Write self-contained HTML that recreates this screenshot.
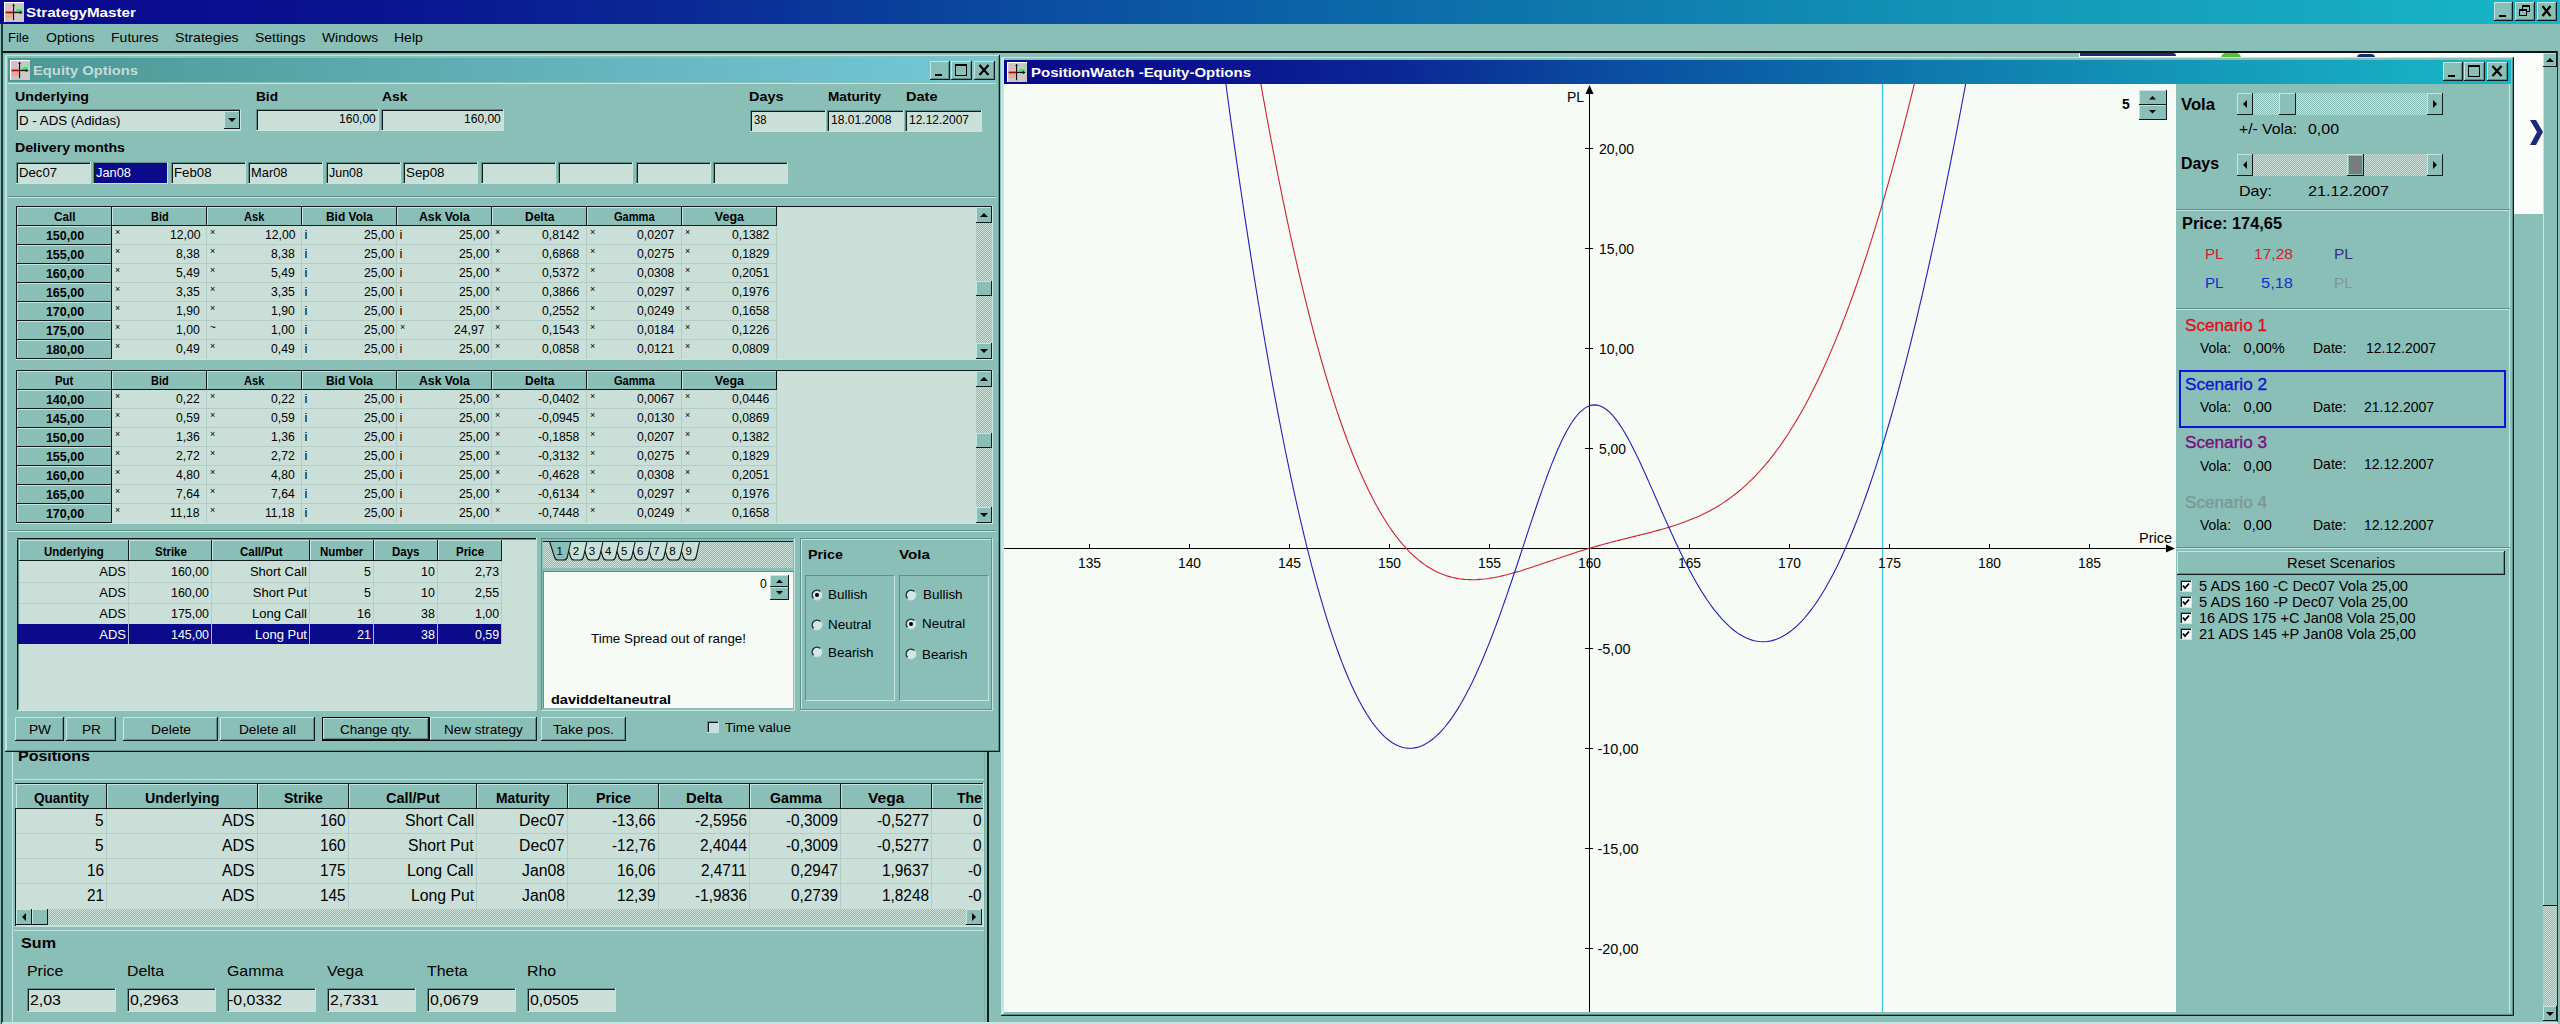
<!DOCTYPE html>
<html lang="en"><head><meta charset="utf-8"><title>StrategyMaster</title>
<style>
html,body{margin:0;padding:0}
body{width:2560px;height:1024px;overflow:hidden;position:relative;background:#8ABFB8;font-family:"Liberation Sans",Arial,sans-serif;color:#000}
div,span,svg{position:absolute;box-sizing:border-box}
span{white-space:pre;line-height:1;transform-origin:0 0}
.hatch{background-color:#8ABFB8;background-image:conic-gradient(#C9DFD8 25%,#8ABFB8 0 50%,#C9DFD8 0 75%,#8ABFB8 0);background-size:2px 2px}

</style></head>
<body>
<div style="left:0px;top:0px;width:2560px;height:24px;background:linear-gradient(90deg,#08088C 0%,#0A1490 15%,#0A2A96 27%,#0A4CA0 40%,#0E76AC 60%,#149ABA 80%,#18B6C6 100%);"></div>
<svg style="left:4px;top:2px" width="20" height="20" viewBox="0 0 20 20"><rect width="20" height="20" fill="#C6C8C4"/><rect x="1" y="1" width="8.5" height="9.5" fill="#D6C0C4"/><rect x="1" y="11" width="8.5" height="5" fill="#E2AE98"/><rect x="1" y="16" width="8.5" height="3" fill="#CFC4C0"/><rect x="10" y="11" width="9" height="8" fill="#D2C8C8"/><path d="M10.5 10 L17.3 3.4 L17.6 10 Z" fill="#48E068"/><path d="M13.5 7 L17.3 3.4 L17.4 7 Z" fill="#90F0A0"/><rect x="1.5" y="9.6" width="8" height="1.7" fill="#A40C10"/><rect x="9.4" y="9.9" width="8.2" height="1.2" fill="#101010"/><path d="M18.6 10.5 L15.8 8.8 L15.8 12.2 Z" fill="#101010"/><rect x="9" y="2.2" width="1.1" height="16" fill="#101010"/><path d="M9.5 1.6 L8.3 4 L10.9 4 Z" fill="#101010"/><rect x="0" y="0" width="20" height="1.1" fill="#fff"/><rect x="0" y="0" width="1.1" height="20" fill="#fff"/></svg>
<span style="left:26.00px;top:6.00px;font-size:13px;font-weight:bold;color:#fff;transform:scaleX(1.1710);">StrategyMaster</span>
<div style="left:2494px;top:2px;width:19px;height:19px;background:#8ABFB8;"></div>
<div style="left:2494px;top:2px;width:19px;height:1px;background:#C4E6E0;"></div>
<div style="left:2494px;top:2px;width:1px;height:19px;background:#C4E6E0;"></div>
<div style="left:2494px;top:20px;width:19px;height:1px;background:#101a1a;"></div>
<div style="left:2512px;top:2px;width:1px;height:19px;background:#101a1a;"></div>
<div style="left:2495px;top:19px;width:17px;height:1px;background:#5E8F8A;"></div>
<div style="left:2511px;top:3px;width:1px;height:17px;background:#5E8F8A;"></div>
<div style="left:2499px;top:15px;width:7px;height:2px;background:#000;"></div>
<div style="left:2515px;top:2px;width:20px;height:19px;background:#8ABFB8;"></div>
<div style="left:2515px;top:2px;width:20px;height:1px;background:#C4E6E0;"></div>
<div style="left:2515px;top:2px;width:1px;height:19px;background:#C4E6E0;"></div>
<div style="left:2515px;top:20px;width:20px;height:1px;background:#101a1a;"></div>
<div style="left:2534px;top:2px;width:1px;height:19px;background:#101a1a;"></div>
<div style="left:2516px;top:19px;width:18px;height:1px;background:#5E8F8A;"></div>
<div style="left:2533px;top:3px;width:1px;height:17px;background:#5E8F8A;"></div>
<div style="left:2522px;top:5px;width:8px;height:7px;border:1px solid #000;border-top:2px solid #000"></div>
<div style="left:2519px;top:9px;width:8px;height:7px;background:#8ABFB8;border:1px solid #000;border-top:2px solid #000"></div>
<div style="left:2537px;top:2px;width:20px;height:19px;background:#8ABFB8;"></div>
<div style="left:2537px;top:2px;width:20px;height:1px;background:#C4E6E0;"></div>
<div style="left:2537px;top:2px;width:1px;height:19px;background:#C4E6E0;"></div>
<div style="left:2537px;top:20px;width:20px;height:1px;background:#101a1a;"></div>
<div style="left:2556px;top:2px;width:1px;height:19px;background:#101a1a;"></div>
<div style="left:2538px;top:19px;width:18px;height:1px;background:#5E8F8A;"></div>
<div style="left:2555px;top:3px;width:1px;height:17px;background:#5E8F8A;"></div>
<svg style="left:2537px;top:2px" width="20" height="19"><path d="M5.5 4 L13.5 14 M13.5 4 L5.5 14" stroke="#000" stroke-width="2.2" fill="none"/></svg>
<span style="left:8.00px;top:30.57px;font-size:13.5px;transform:scaleX(0.9648);">File</span>
<span style="left:46.00px;top:30.57px;font-size:13.5px;transform:scaleX(1.0423);">Options</span>
<span style="left:111.00px;top:30.57px;font-size:13.5px;transform:scaleX(1.0397);">Futures</span>
<span style="left:175.00px;top:30.57px;font-size:13.5px;transform:scaleX(1.0461);">Strategies</span>
<span style="left:255.00px;top:30.57px;font-size:13.5px;transform:scaleX(1.0352);">Settings</span>
<span style="left:321.50px;top:30.57px;font-size:13.5px;transform:scaleX(1.0262);">Windows</span>
<span style="left:393.80px;top:30.57px;font-size:13.5px;transform:scaleX(1.0373);">Help</span>
<div style="left:1px;top:24px;width:2px;height:1000px;background:#1c3a3a;"></div>
<div style="left:2px;top:51px;width:2556px;height:2px;background:#0c1414;"></div>
<div style="left:2557px;top:51px;width:1px;height:973px;background:#1c3030;"></div>
<div style="left:12px;top:752px;width:1px;height:272px;background:#C4E6E0;"></div>
<div style="left:984px;top:752px;width:1px;height:270px;background:#79ADA6;"></div>
<div style="left:987px;top:752px;width:2px;height:270px;background:#0e1c1a;"></div>
<div style="left:2px;top:1022px;width:2556px;height:2px;background:#C4E6E0;"></div>
<span style="left:18.00px;top:748.73px;font-size:14.5px;font-weight:bold;transform:scaleX(1.1032);">Positions</span>
<div style="left:14px;top:779px;width:970px;height:1px;background:#C4E6E0;"></div>
<div style="left:15px;top:783px;width:968px;height:143px;background:#C9DFD8;"></div>
<div style="left:15px;top:783px;width:968px;height:1px;background:#101a1a;"></div>
<div style="left:15px;top:783px;width:1px;height:143px;background:#101a1a;"></div>
<div style="left:15px;top:784px;width:91px;height:24px;background:#8ABFB8;"></div>
<div style="left:16px;top:784px;width:91px;height:1px;background:#C4E6E0;"></div>
<div style="left:16px;top:784px;width:1px;height:24px;background:#C4E6E0;"></div>
<span style="left:34.00px;top:790.65px;font-size:14px;font-weight:bold;transform:scaleX(0.9686);">Quantity</span>
<div style="left:106px;top:784px;width:151px;height:24px;background:#8ABFB8;"></div>
<div style="left:107px;top:784px;width:151px;height:1px;background:#C4E6E0;"></div>
<div style="left:107px;top:784px;width:1px;height:24px;background:#C4E6E0;"></div>
<span style="left:145.25px;top:790.65px;font-size:14px;font-weight:bold;transform:scaleX(1.0188);">Underlying</span>
<div style="left:257px;top:784px;width:91px;height:24px;background:#8ABFB8;"></div>
<div style="left:258px;top:784px;width:91px;height:1px;background:#C4E6E0;"></div>
<div style="left:258px;top:784px;width:1px;height:24px;background:#C4E6E0;"></div>
<span style="left:284.00px;top:790.65px;font-size:14px;font-weight:bold;">Strike</span>
<div style="left:348px;top:784px;width:128px;height:24px;background:#8ABFB8;"></div>
<div style="left:349px;top:784px;width:128px;height:1px;background:#C4E6E0;"></div>
<div style="left:349px;top:784px;width:1px;height:24px;background:#C4E6E0;"></div>
<span style="left:386.10px;top:790.65px;font-size:14px;font-weight:bold;transform:scaleX(1.0321);">Call/Put</span>
<div style="left:476px;top:784px;width:91px;height:24px;background:#8ABFB8;"></div>
<div style="left:477px;top:784px;width:91px;height:1px;background:#C4E6E0;"></div>
<div style="left:477px;top:784px;width:1px;height:24px;background:#C4E6E0;"></div>
<span style="left:495.60px;top:790.65px;font-size:14px;font-weight:bold;transform:scaleX(0.9880);">Maturity</span>
<div style="left:567px;top:784px;width:91px;height:24px;background:#8ABFB8;"></div>
<div style="left:568px;top:784px;width:91px;height:1px;background:#C4E6E0;"></div>
<div style="left:568px;top:784px;width:1px;height:24px;background:#C4E6E0;"></div>
<span style="left:596.00px;top:790.65px;font-size:14px;font-weight:bold;transform:scaleX(1.0219);">Price</span>
<div style="left:658px;top:784px;width:91px;height:24px;background:#8ABFB8;"></div>
<div style="left:659px;top:784px;width:91px;height:1px;background:#C4E6E0;"></div>
<div style="left:659px;top:784px;width:1px;height:24px;background:#C4E6E0;"></div>
<span style="left:686.35px;top:790.65px;font-size:14px;font-weight:bold;transform:scaleX(1.0603);">Delta</span>
<div style="left:749px;top:784px;width:91px;height:24px;background:#8ABFB8;"></div>
<div style="left:750px;top:784px;width:91px;height:1px;background:#C4E6E0;"></div>
<div style="left:750px;top:784px;width:1px;height:24px;background:#C4E6E0;"></div>
<span style="left:769.50px;top:790.65px;font-size:14px;font-weight:bold;transform:scaleX(1.0125);">Gamma</span>
<div style="left:840px;top:784px;width:91px;height:24px;background:#8ABFB8;"></div>
<div style="left:841px;top:784px;width:91px;height:1px;background:#C4E6E0;"></div>
<div style="left:841px;top:784px;width:1px;height:24px;background:#C4E6E0;"></div>
<span style="left:868.35px;top:790.65px;font-size:14px;font-weight:bold;transform:scaleX(1.1100);">Vega</span>
<div style="left:931px;top:784px;width:52px;height:24px;background:#8ABFB8;"></div>
<div style="left:932px;top:784px;width:52px;height:1px;background:#C4E6E0;"></div>
<div style="left:932px;top:784px;width:1px;height:24px;background:#C4E6E0;"></div>
<span style="left:957.00px;top:790.65px;font-size:14px;font-weight:bold;">The</span>
<div style="left:106px;top:784px;width:1px;height:25px;background:#101a1a;"></div>
<div style="left:257px;top:784px;width:1px;height:25px;background:#101a1a;"></div>
<div style="left:348px;top:784px;width:1px;height:25px;background:#101a1a;"></div>
<div style="left:476px;top:784px;width:1px;height:25px;background:#101a1a;"></div>
<div style="left:567px;top:784px;width:1px;height:25px;background:#101a1a;"></div>
<div style="left:658px;top:784px;width:1px;height:25px;background:#101a1a;"></div>
<div style="left:749px;top:784px;width:1px;height:25px;background:#101a1a;"></div>
<div style="left:840px;top:784px;width:1px;height:25px;background:#101a1a;"></div>
<div style="left:931px;top:784px;width:1px;height:25px;background:#101a1a;"></div>
<div style="left:15px;top:808px;width:968px;height:1px;background:#101a1a;"></div>
<span style="left:95.15px;top:813.26px;font-size:16px;transform:scaleX(0.9600);">5</span>
<span style="left:222.29px;top:813.26px;font-size:16px;transform:scaleX(0.9850);">ADS</span>
<span style="left:320.06px;top:813.26px;font-size:16px;transform:scaleX(0.9600);">160</span>
<span style="left:404.50px;top:813.26px;font-size:16px;transform:scaleX(0.9850);">Short Call</span>
<span style="left:519.14px;top:813.26px;font-size:16px;transform:scaleX(0.9850);">Dec07</span>
<span style="left:612.14px;top:813.26px;font-size:16px;transform:scaleX(0.9600);">-13,66</span>
<span style="left:694.61px;top:813.26px;font-size:16px;transform:scaleX(0.9600);">-2,5956</span>
<span style="left:785.61px;top:813.26px;font-size:16px;transform:scaleX(0.9600);">-0,3009</span>
<span style="left:876.61px;top:813.26px;font-size:16px;transform:scaleX(0.9600);">-0,5277</span>
<span style="left:972.69px;top:813.26px;font-size:16px;transform:scaleX(0.9600);">0,</span>
<div style="left:16px;top:833px;width:966px;height:1px;background:#B3CCC5;"></div>
<span style="left:95.15px;top:838.26px;font-size:16px;transform:scaleX(0.9600);">5</span>
<span style="left:222.29px;top:838.26px;font-size:16px;transform:scaleX(0.9850);">ADS</span>
<span style="left:320.06px;top:838.26px;font-size:16px;transform:scaleX(0.9600);">160</span>
<span style="left:408.00px;top:838.26px;font-size:16px;transform:scaleX(0.9850);">Short Put</span>
<span style="left:519.14px;top:838.26px;font-size:16px;transform:scaleX(0.9850);">Dec07</span>
<span style="left:612.14px;top:838.26px;font-size:16px;transform:scaleX(0.9600);">-12,76</span>
<span style="left:699.72px;top:838.26px;font-size:16px;transform:scaleX(0.9600);">2,4044</span>
<span style="left:785.61px;top:838.26px;font-size:16px;transform:scaleX(0.9600);">-0,3009</span>
<span style="left:876.61px;top:838.26px;font-size:16px;transform:scaleX(0.9600);">-0,5277</span>
<span style="left:972.69px;top:838.26px;font-size:16px;transform:scaleX(0.9600);">0,</span>
<div style="left:16px;top:858px;width:966px;height:1px;background:#B3CCC5;"></div>
<span style="left:86.62px;top:863.26px;font-size:16px;transform:scaleX(0.9600);">16</span>
<span style="left:222.29px;top:863.26px;font-size:16px;transform:scaleX(0.9850);">ADS</span>
<span style="left:320.06px;top:863.26px;font-size:16px;transform:scaleX(0.9600);">175</span>
<span style="left:407.10px;top:863.26px;font-size:16px;transform:scaleX(0.9850);">Long Call</span>
<span style="left:521.76px;top:863.26px;font-size:16px;transform:scaleX(0.9850);">Jan08</span>
<span style="left:617.25px;top:863.26px;font-size:16px;transform:scaleX(0.9600);">16,06</span>
<span style="left:700.86px;top:863.26px;font-size:16px;transform:scaleX(0.9600);">2,4711</span>
<span style="left:790.72px;top:863.26px;font-size:16px;transform:scaleX(0.9600);">0,2947</span>
<span style="left:881.72px;top:863.26px;font-size:16px;transform:scaleX(0.9600);">1,9637</span>
<span style="left:967.58px;top:863.26px;font-size:16px;transform:scaleX(0.9600);">-0,</span>
<div style="left:16px;top:883px;width:966px;height:1px;background:#B3CCC5;"></div>
<span style="left:86.62px;top:888.26px;font-size:16px;transform:scaleX(0.9600);">21</span>
<span style="left:222.29px;top:888.26px;font-size:16px;transform:scaleX(0.9850);">ADS</span>
<span style="left:320.06px;top:888.26px;font-size:16px;transform:scaleX(0.9600);">145</span>
<span style="left:410.60px;top:888.26px;font-size:16px;transform:scaleX(0.9850);">Long Put</span>
<span style="left:521.76px;top:888.26px;font-size:16px;transform:scaleX(0.9850);">Jan08</span>
<span style="left:617.25px;top:888.26px;font-size:16px;transform:scaleX(0.9600);">12,39</span>
<span style="left:694.61px;top:888.26px;font-size:16px;transform:scaleX(0.9600);">-1,9836</span>
<span style="left:790.72px;top:888.26px;font-size:16px;transform:scaleX(0.9600);">0,2739</span>
<span style="left:881.72px;top:888.26px;font-size:16px;transform:scaleX(0.9600);">1,8248</span>
<span style="left:967.58px;top:888.26px;font-size:16px;transform:scaleX(0.9600);">-0,</span>
<div style="left:106px;top:809px;width:1px;height:100px;background:#B3CCC5;"></div>
<div style="left:257px;top:809px;width:1px;height:100px;background:#B3CCC5;"></div>
<div style="left:348px;top:809px;width:1px;height:100px;background:#B3CCC5;"></div>
<div style="left:476px;top:809px;width:1px;height:100px;background:#B3CCC5;"></div>
<div style="left:567px;top:809px;width:1px;height:100px;background:#B3CCC5;"></div>
<div style="left:658px;top:809px;width:1px;height:100px;background:#B3CCC5;"></div>
<div style="left:749px;top:809px;width:1px;height:100px;background:#B3CCC5;"></div>
<div style="left:840px;top:809px;width:1px;height:100px;background:#B3CCC5;"></div>
<div style="left:931px;top:809px;width:1px;height:100px;background:#B3CCC5;"></div>
<div class="hatch" style="left:16px;top:909px;width:966px;height:16px;"></div>
<div style="left:16px;top:909px;width:16px;height:16px;background:#8ABFB8;"></div>
<div style="left:16px;top:909px;width:16px;height:1px;background:#C4E6E0;"></div>
<div style="left:16px;top:909px;width:1px;height:16px;background:#C4E6E0;"></div>
<div style="left:16px;top:924px;width:16px;height:1px;background:#101a1a;"></div>
<div style="left:31px;top:909px;width:1px;height:16px;background:#101a1a;"></div>
<div style="left:32px;top:909px;width:16px;height:16px;background:#8ABFB8;"></div>
<div style="left:32px;top:909px;width:16px;height:1px;background:#C4E6E0;"></div>
<div style="left:32px;top:909px;width:1px;height:16px;background:#C4E6E0;"></div>
<div style="left:32px;top:924px;width:16px;height:1px;background:#101a1a;"></div>
<div style="left:47px;top:909px;width:1px;height:16px;background:#101a1a;"></div>
<div style="left:966px;top:909px;width:16px;height:16px;background:#8ABFB8;"></div>
<div style="left:966px;top:909px;width:16px;height:1px;background:#C4E6E0;"></div>
<div style="left:966px;top:909px;width:1px;height:16px;background:#C4E6E0;"></div>
<div style="left:966px;top:924px;width:16px;height:1px;background:#101a1a;"></div>
<div style="left:981px;top:909px;width:1px;height:16px;background:#101a1a;"></div>
<svg style="left:16px;top:909px" width="16" height="16"><path d="M10 4 L6 8 L10 12Z" fill="#000"/></svg>
<svg style="left:966px;top:909px" width="16" height="16"><path d="M6 4 L10 8 L6 12Z" fill="#000"/></svg>
<div style="left:15px;top:926px;width:968px;height:1px;background:#C4E6E0;"></div>
<div style="left:983px;top:783px;width:1px;height:144px;background:#C4E6E0;"></div>
<div style="left:984px;top:783px;width:3px;height:144px;background:#8ABFB8;"></div>
<div style="left:984px;top:752px;width:1px;height:270px;background:#79ADA6;"></div>
<div style="left:14px;top:930px;width:970px;height:1px;background:#C4E6E0;"></div>
<span style="left:21.00px;top:935.30px;font-size:15px;font-weight:bold;transform:scaleX(1.0764);">Sum</span>
<span style="left:27.00px;top:962.80px;font-size:15px;transform:scaleX(1.0600);">Price</span>
<div style="left:27px;top:988px;width:89px;height:24px;background:#C9DFD8;"></div>
<div style="left:27px;top:988px;width:89px;height:1px;background:#5E8F8A;"></div>
<div style="left:27px;top:988px;width:1px;height:24px;background:#5E8F8A;"></div>
<div style="left:28px;top:989px;width:87px;height:1px;background:#101a1a;"></div>
<div style="left:28px;top:989px;width:1px;height:22px;background:#101a1a;"></div>
<div style="left:27px;top:1011px;width:89px;height:1px;background:#C4E6E0;"></div>
<div style="left:115px;top:988px;width:1px;height:24px;background:#C4E6E0;"></div>
<span style="left:30.00px;top:991.80px;font-size:15px;transform:scaleX(1.0600);">2,03</span>
<span style="left:127.00px;top:962.80px;font-size:15px;transform:scaleX(1.0600);">Delta</span>
<div style="left:127px;top:988px;width:89px;height:24px;background:#C9DFD8;"></div>
<div style="left:127px;top:988px;width:89px;height:1px;background:#5E8F8A;"></div>
<div style="left:127px;top:988px;width:1px;height:24px;background:#5E8F8A;"></div>
<div style="left:128px;top:989px;width:87px;height:1px;background:#101a1a;"></div>
<div style="left:128px;top:989px;width:1px;height:22px;background:#101a1a;"></div>
<div style="left:127px;top:1011px;width:89px;height:1px;background:#C4E6E0;"></div>
<div style="left:215px;top:988px;width:1px;height:24px;background:#C4E6E0;"></div>
<span style="left:130.00px;top:991.80px;font-size:15px;transform:scaleX(1.0600);">0,2963</span>
<span style="left:227.00px;top:962.80px;font-size:15px;transform:scaleX(1.0600);">Gamma</span>
<div style="left:227px;top:988px;width:89px;height:24px;background:#C9DFD8;"></div>
<div style="left:227px;top:988px;width:89px;height:1px;background:#5E8F8A;"></div>
<div style="left:227px;top:988px;width:1px;height:24px;background:#5E8F8A;"></div>
<div style="left:228px;top:989px;width:87px;height:1px;background:#101a1a;"></div>
<div style="left:228px;top:989px;width:1px;height:22px;background:#101a1a;"></div>
<div style="left:227px;top:1011px;width:89px;height:1px;background:#C4E6E0;"></div>
<div style="left:315px;top:988px;width:1px;height:24px;background:#C4E6E0;"></div>
<span style="left:228.00px;top:991.80px;font-size:15px;transform:scaleX(1.0600);">-0,0332</span>
<span style="left:327.00px;top:962.80px;font-size:15px;transform:scaleX(1.0600);">Vega</span>
<div style="left:327px;top:988px;width:89px;height:24px;background:#C9DFD8;"></div>
<div style="left:327px;top:988px;width:89px;height:1px;background:#5E8F8A;"></div>
<div style="left:327px;top:988px;width:1px;height:24px;background:#5E8F8A;"></div>
<div style="left:328px;top:989px;width:87px;height:1px;background:#101a1a;"></div>
<div style="left:328px;top:989px;width:1px;height:22px;background:#101a1a;"></div>
<div style="left:327px;top:1011px;width:89px;height:1px;background:#C4E6E0;"></div>
<div style="left:415px;top:988px;width:1px;height:24px;background:#C4E6E0;"></div>
<span style="left:330.00px;top:991.80px;font-size:15px;transform:scaleX(1.0600);">2,7331</span>
<span style="left:427.00px;top:962.80px;font-size:15px;transform:scaleX(1.0600);">Theta</span>
<div style="left:427px;top:988px;width:89px;height:24px;background:#C9DFD8;"></div>
<div style="left:427px;top:988px;width:89px;height:1px;background:#5E8F8A;"></div>
<div style="left:427px;top:988px;width:1px;height:24px;background:#5E8F8A;"></div>
<div style="left:428px;top:989px;width:87px;height:1px;background:#101a1a;"></div>
<div style="left:428px;top:989px;width:1px;height:22px;background:#101a1a;"></div>
<div style="left:427px;top:1011px;width:89px;height:1px;background:#C4E6E0;"></div>
<div style="left:515px;top:988px;width:1px;height:24px;background:#C4E6E0;"></div>
<span style="left:430.00px;top:991.80px;font-size:15px;transform:scaleX(1.0600);">0,0679</span>
<span style="left:527.00px;top:962.80px;font-size:15px;transform:scaleX(1.0600);">Rho</span>
<div style="left:527px;top:988px;width:89px;height:24px;background:#C9DFD8;"></div>
<div style="left:527px;top:988px;width:89px;height:1px;background:#5E8F8A;"></div>
<div style="left:527px;top:988px;width:1px;height:24px;background:#5E8F8A;"></div>
<div style="left:528px;top:989px;width:87px;height:1px;background:#101a1a;"></div>
<div style="left:528px;top:989px;width:1px;height:22px;background:#101a1a;"></div>
<div style="left:527px;top:1011px;width:89px;height:1px;background:#C4E6E0;"></div>
<div style="left:615px;top:988px;width:1px;height:24px;background:#C4E6E0;"></div>
<span style="left:530.00px;top:991.80px;font-size:15px;transform:scaleX(1.0600);">0,0505</span>
<div style="left:5px;top:55px;width:995px;height:697px;background:#8ABFB8;"></div>
<div style="left:5px;top:55px;width:995px;height:1px;background:#C4E6E0;"></div>
<div style="left:5px;top:55px;width:2px;height:697px;background:#C4E6E0;"></div>
<div style="left:5px;top:751px;width:995px;height:1px;background:#101a1a;"></div>
<div style="left:999px;top:55px;width:1px;height:697px;background:#101a1a;"></div>
<div style="left:6px;top:750px;width:993px;height:1px;background:#5E8F8A;"></div>
<div style="left:998px;top:56px;width:1px;height:695px;background:#5E8F8A;"></div>
<div style="left:8px;top:58px;width:988px;height:24px;background:linear-gradient(90deg,#4C9894 0%,#74C8D8 100%);"></div>
<div style="left:8px;top:83px;width:988px;height:1px;background:#C4E6E0;"></div>
<svg style="left:10px;top:60px" width="20" height="20" viewBox="0 0 20 20"><rect width="20" height="20" fill="#C6C8C4"/><rect x="1" y="1" width="8.5" height="9.5" fill="#D6C0C4"/><rect x="1" y="11" width="8.5" height="5" fill="#E2AE98"/><rect x="1" y="16" width="8.5" height="3" fill="#CFC4C0"/><rect x="10" y="11" width="9" height="8" fill="#D2C8C8"/><path d="M10.5 10 L17.3 3.4 L17.6 10 Z" fill="#48E068"/><path d="M13.5 7 L17.3 3.4 L17.4 7 Z" fill="#90F0A0"/><rect x="1.5" y="9.6" width="8" height="1.7" fill="#A40C10"/><rect x="9.4" y="9.9" width="8.2" height="1.2" fill="#101010"/><path d="M18.6 10.5 L15.8 8.8 L15.8 12.2 Z" fill="#101010"/><rect x="9" y="2.2" width="1.1" height="16" fill="#101010"/><path d="M9.5 1.6 L8.3 4 L10.9 4 Z" fill="#101010"/><rect x="0" y="0" width="20" height="1.1" fill="#fff"/><rect x="0" y="0" width="1.1" height="20" fill="#fff"/></svg>
<span style="left:33.00px;top:64.00px;font-size:13px;font-weight:bold;color:#C4DCD8;transform:scaleX(1.1357);">Equity Options</span>
<div style="left:930px;top:61px;width:20px;height:19px;background:#8ABFB8;"></div>
<div style="left:930px;top:61px;width:20px;height:1px;background:#C4E6E0;"></div>
<div style="left:930px;top:61px;width:1px;height:19px;background:#C4E6E0;"></div>
<div style="left:930px;top:79px;width:20px;height:1px;background:#101a1a;"></div>
<div style="left:949px;top:61px;width:1px;height:19px;background:#101a1a;"></div>
<div style="left:931px;top:78px;width:18px;height:1px;background:#5E8F8A;"></div>
<div style="left:948px;top:62px;width:1px;height:17px;background:#5E8F8A;"></div>
<div style="left:935px;top:74px;width:7px;height:2px;background:#000;"></div>
<div style="left:951px;top:61px;width:21px;height:19px;background:#8ABFB8;"></div>
<div style="left:951px;top:61px;width:21px;height:1px;background:#C4E6E0;"></div>
<div style="left:951px;top:61px;width:1px;height:19px;background:#C4E6E0;"></div>
<div style="left:951px;top:79px;width:21px;height:1px;background:#101a1a;"></div>
<div style="left:971px;top:61px;width:1px;height:19px;background:#101a1a;"></div>
<div style="left:952px;top:78px;width:19px;height:1px;background:#5E8F8A;"></div>
<div style="left:970px;top:62px;width:1px;height:17px;background:#5E8F8A;"></div>
<div style="left:955px;top:64px;width:12px;height:12px;border:1px solid #000;border-top:2px solid #000"></div>
<div style="left:974px;top:61px;width:21px;height:19px;background:#8ABFB8;"></div>
<div style="left:974px;top:61px;width:21px;height:1px;background:#C4E6E0;"></div>
<div style="left:974px;top:61px;width:1px;height:19px;background:#C4E6E0;"></div>
<div style="left:974px;top:79px;width:21px;height:1px;background:#101a1a;"></div>
<div style="left:994px;top:61px;width:1px;height:19px;background:#101a1a;"></div>
<div style="left:975px;top:78px;width:19px;height:1px;background:#5E8F8A;"></div>
<div style="left:993px;top:62px;width:1px;height:17px;background:#5E8F8A;"></div>
<svg style="left:974px;top:61px" width="21" height="19"><path d="M5.5 4 L14.5 14 M14.5 4 L5.5 14" stroke="#000" stroke-width="2.2" fill="none"/></svg>
<span style="left:15.00px;top:90.00px;font-size:13px;font-weight:bold;transform:scaleX(1.0897);">Underlying</span>
<span style="left:255.50px;top:90.00px;font-size:13px;font-weight:bold;transform:scaleX(1.0500);">Bid</span>
<span style="left:382.00px;top:90.00px;font-size:13px;font-weight:bold;transform:scaleX(1.0688);">Ask</span>
<span style="left:748.50px;top:89.60px;font-size:13px;font-weight:bold;transform:scaleX(1.1101);">Days</span>
<span style="left:827.50px;top:89.60px;font-size:13px;font-weight:bold;transform:scaleX(1.0482);">Maturity</span>
<span style="left:905.60px;top:89.60px;font-size:13px;font-weight:bold;transform:scaleX(1.1175);">Date</span>
<div style="left:16px;top:109px;width:225px;height:22px;background:#C9DFD8;"></div>
<div style="left:16px;top:109px;width:225px;height:1px;background:#5E8F8A;"></div>
<div style="left:16px;top:109px;width:1px;height:22px;background:#5E8F8A;"></div>
<div style="left:17px;top:110px;width:223px;height:1px;background:#101a1a;"></div>
<div style="left:17px;top:110px;width:1px;height:20px;background:#101a1a;"></div>
<div style="left:16px;top:130px;width:225px;height:1px;background:#C4E6E0;"></div>
<div style="left:240px;top:109px;width:1px;height:22px;background:#C4E6E0;"></div>
<span style="left:19.00px;top:114.00px;font-size:13px;transform:scaleX(1.0254);">D - ADS (Adidas)</span>
<div style="left:224px;top:111px;width:16px;height:18px;background:#8ABFB8;"></div>
<div style="left:224px;top:111px;width:16px;height:1px;background:#C4E6E0;"></div>
<div style="left:224px;top:111px;width:1px;height:18px;background:#C4E6E0;"></div>
<div style="left:224px;top:128px;width:16px;height:1px;background:#101a1a;"></div>
<div style="left:239px;top:111px;width:1px;height:18px;background:#101a1a;"></div>
<svg style="left:224px;top:111px" width="16" height="18"><path d="M4 7 L12 7 L8 11Z" fill="#000"/></svg>
<div style="left:256px;top:109px;width:123px;height:22px;background:#C9DFD8;"></div>
<div style="left:256px;top:109px;width:123px;height:1px;background:#5E8F8A;"></div>
<div style="left:256px;top:109px;width:1px;height:22px;background:#5E8F8A;"></div>
<div style="left:257px;top:110px;width:121px;height:1px;background:#101a1a;"></div>
<div style="left:257px;top:110px;width:1px;height:20px;background:#101a1a;"></div>
<div style="left:256px;top:130px;width:123px;height:1px;background:#C4E6E0;"></div>
<div style="left:378px;top:109px;width:1px;height:22px;background:#C4E6E0;"></div>
<span style="left:338.70px;top:113.42px;font-size:12.5px;transform:scaleX(0.9625);">160,00</span>
<div style="left:381px;top:109px;width:123px;height:22px;background:#C9DFD8;"></div>
<div style="left:381px;top:109px;width:123px;height:1px;background:#5E8F8A;"></div>
<div style="left:381px;top:109px;width:1px;height:22px;background:#5E8F8A;"></div>
<div style="left:382px;top:110px;width:121px;height:1px;background:#101a1a;"></div>
<div style="left:382px;top:110px;width:1px;height:20px;background:#101a1a;"></div>
<div style="left:381px;top:130px;width:123px;height:1px;background:#C4E6E0;"></div>
<div style="left:503px;top:109px;width:1px;height:22px;background:#C4E6E0;"></div>
<span style="left:463.70px;top:113.42px;font-size:12.5px;transform:scaleX(0.9625);">160,00</span>
<div style="left:750px;top:110px;width:76px;height:22px;background:#C9DFD8;"></div>
<div style="left:750px;top:110px;width:76px;height:1px;background:#5E8F8A;"></div>
<div style="left:750px;top:110px;width:1px;height:22px;background:#5E8F8A;"></div>
<div style="left:751px;top:111px;width:74px;height:1px;background:#101a1a;"></div>
<div style="left:751px;top:111px;width:1px;height:20px;background:#101a1a;"></div>
<div style="left:750px;top:131px;width:76px;height:1px;background:#C4E6E0;"></div>
<div style="left:825px;top:110px;width:1px;height:22px;background:#C4E6E0;"></div>
<span style="left:753.80px;top:113.40px;font-size:13px;transform:scaleX(0.8639);">38</span>
<div style="left:827px;top:110px;width:77px;height:22px;background:#C9DFD8;"></div>
<div style="left:827px;top:110px;width:77px;height:1px;background:#5E8F8A;"></div>
<div style="left:827px;top:110px;width:1px;height:22px;background:#5E8F8A;"></div>
<div style="left:828px;top:111px;width:75px;height:1px;background:#101a1a;"></div>
<div style="left:828px;top:111px;width:1px;height:20px;background:#101a1a;"></div>
<div style="left:827px;top:131px;width:77px;height:1px;background:#C4E6E0;"></div>
<div style="left:903px;top:110px;width:1px;height:22px;background:#C4E6E0;"></div>
<span style="left:830.60px;top:113.40px;font-size:13px;transform:scaleX(0.9297);">18.01.2008</span>
<div style="left:905px;top:110px;width:77px;height:22px;background:#C9DFD8;"></div>
<div style="left:905px;top:110px;width:77px;height:1px;background:#5E8F8A;"></div>
<div style="left:905px;top:110px;width:1px;height:22px;background:#5E8F8A;"></div>
<div style="left:906px;top:111px;width:75px;height:1px;background:#101a1a;"></div>
<div style="left:906px;top:111px;width:1px;height:20px;background:#101a1a;"></div>
<div style="left:905px;top:131px;width:77px;height:1px;background:#C4E6E0;"></div>
<div style="left:981px;top:110px;width:1px;height:22px;background:#C4E6E0;"></div>
<span style="left:908.80px;top:113.40px;font-size:13px;transform:scaleX(0.9220);">12.12.2007</span>
<span style="left:15.00px;top:141.00px;font-size:13px;font-weight:bold;transform:scaleX(1.0874);">Delivery months</span>
<div style="left:16px;top:162px;width:75px;height:22px;background:#C9DFD8;"></div>
<div style="left:16px;top:162px;width:75px;height:1px;background:#5E8F8A;"></div>
<div style="left:16px;top:162px;width:1px;height:22px;background:#5E8F8A;"></div>
<div style="left:17px;top:163px;width:73px;height:1px;background:#101a1a;"></div>
<div style="left:17px;top:163px;width:1px;height:20px;background:#101a1a;"></div>
<div style="left:16px;top:183px;width:75px;height:1px;background:#C4E6E0;"></div>
<div style="left:90px;top:162px;width:1px;height:22px;background:#C4E6E0;"></div>
<span style="left:19.00px;top:166.00px;font-size:13px;transform:scaleX(1.0112);">Dec07</span>
<div style="left:93px;top:162px;width:75px;height:22px;background:#C9DFD8;"></div>
<div style="left:93px;top:162px;width:75px;height:1px;background:#5E8F8A;"></div>
<div style="left:93px;top:162px;width:1px;height:22px;background:#5E8F8A;"></div>
<div style="left:94px;top:163px;width:73px;height:1px;background:#101a1a;"></div>
<div style="left:94px;top:163px;width:1px;height:20px;background:#101a1a;"></div>
<div style="left:93px;top:183px;width:75px;height:1px;background:#C4E6E0;"></div>
<div style="left:167px;top:162px;width:1px;height:22px;background:#C4E6E0;"></div>
<div style="left:95px;top:164px;width:72px;height:19px;background:#0A0A8A;"></div>
<span style="left:96.00px;top:166.00px;font-size:13px;color:#fff;transform:scaleX(0.9881);">Jan08</span>
<div style="left:171px;top:162px;width:75px;height:22px;background:#C9DFD8;"></div>
<div style="left:171px;top:162px;width:75px;height:1px;background:#5E8F8A;"></div>
<div style="left:171px;top:162px;width:1px;height:22px;background:#5E8F8A;"></div>
<div style="left:172px;top:163px;width:73px;height:1px;background:#101a1a;"></div>
<div style="left:172px;top:163px;width:1px;height:20px;background:#101a1a;"></div>
<div style="left:171px;top:183px;width:75px;height:1px;background:#C4E6E0;"></div>
<div style="left:245px;top:162px;width:1px;height:22px;background:#C4E6E0;"></div>
<span style="left:174.00px;top:166.00px;font-size:13px;transform:scaleX(1.0169);">Feb08</span>
<div style="left:248px;top:162px;width:75px;height:22px;background:#C9DFD8;"></div>
<div style="left:248px;top:162px;width:75px;height:1px;background:#5E8F8A;"></div>
<div style="left:248px;top:162px;width:1px;height:22px;background:#5E8F8A;"></div>
<div style="left:249px;top:163px;width:73px;height:1px;background:#101a1a;"></div>
<div style="left:249px;top:163px;width:1px;height:20px;background:#101a1a;"></div>
<div style="left:248px;top:183px;width:75px;height:1px;background:#C4E6E0;"></div>
<div style="left:322px;top:162px;width:1px;height:22px;background:#C4E6E0;"></div>
<span style="left:251.00px;top:166.00px;font-size:13px;transform:scaleX(0.9903);">Mar08</span>
<div style="left:326px;top:162px;width:75px;height:22px;background:#C9DFD8;"></div>
<div style="left:326px;top:162px;width:75px;height:1px;background:#5E8F8A;"></div>
<div style="left:326px;top:162px;width:1px;height:22px;background:#5E8F8A;"></div>
<div style="left:327px;top:163px;width:73px;height:1px;background:#101a1a;"></div>
<div style="left:327px;top:163px;width:1px;height:20px;background:#101a1a;"></div>
<div style="left:326px;top:183px;width:75px;height:1px;background:#C4E6E0;"></div>
<div style="left:400px;top:162px;width:1px;height:22px;background:#C4E6E0;"></div>
<span style="left:329.00px;top:166.00px;font-size:13px;transform:scaleX(0.9599);">Jun08</span>
<div style="left:403px;top:162px;width:75px;height:22px;background:#C9DFD8;"></div>
<div style="left:403px;top:162px;width:75px;height:1px;background:#5E8F8A;"></div>
<div style="left:403px;top:162px;width:1px;height:22px;background:#5E8F8A;"></div>
<div style="left:404px;top:163px;width:73px;height:1px;background:#101a1a;"></div>
<div style="left:404px;top:163px;width:1px;height:20px;background:#101a1a;"></div>
<div style="left:403px;top:183px;width:75px;height:1px;background:#C4E6E0;"></div>
<div style="left:477px;top:162px;width:1px;height:22px;background:#C4E6E0;"></div>
<span style="left:406.00px;top:166.00px;font-size:13px;transform:scaleX(1.0241);">Sep08</span>
<div style="left:481px;top:162px;width:75px;height:22px;background:#C9DFD8;"></div>
<div style="left:481px;top:162px;width:75px;height:1px;background:#5E8F8A;"></div>
<div style="left:481px;top:162px;width:1px;height:22px;background:#5E8F8A;"></div>
<div style="left:482px;top:163px;width:73px;height:1px;background:#101a1a;"></div>
<div style="left:482px;top:163px;width:1px;height:20px;background:#101a1a;"></div>
<div style="left:481px;top:183px;width:75px;height:1px;background:#C4E6E0;"></div>
<div style="left:555px;top:162px;width:1px;height:22px;background:#C4E6E0;"></div>
<div style="left:558px;top:162px;width:75px;height:22px;background:#C9DFD8;"></div>
<div style="left:558px;top:162px;width:75px;height:1px;background:#5E8F8A;"></div>
<div style="left:558px;top:162px;width:1px;height:22px;background:#5E8F8A;"></div>
<div style="left:559px;top:163px;width:73px;height:1px;background:#101a1a;"></div>
<div style="left:559px;top:163px;width:1px;height:20px;background:#101a1a;"></div>
<div style="left:558px;top:183px;width:75px;height:1px;background:#C4E6E0;"></div>
<div style="left:632px;top:162px;width:1px;height:22px;background:#C4E6E0;"></div>
<div style="left:636px;top:162px;width:75px;height:22px;background:#C9DFD8;"></div>
<div style="left:636px;top:162px;width:75px;height:1px;background:#5E8F8A;"></div>
<div style="left:636px;top:162px;width:1px;height:22px;background:#5E8F8A;"></div>
<div style="left:637px;top:163px;width:73px;height:1px;background:#101a1a;"></div>
<div style="left:637px;top:163px;width:1px;height:20px;background:#101a1a;"></div>
<div style="left:636px;top:183px;width:75px;height:1px;background:#C4E6E0;"></div>
<div style="left:710px;top:162px;width:1px;height:22px;background:#C4E6E0;"></div>
<div style="left:713px;top:162px;width:75px;height:22px;background:#C9DFD8;"></div>
<div style="left:713px;top:162px;width:75px;height:1px;background:#5E8F8A;"></div>
<div style="left:713px;top:162px;width:1px;height:22px;background:#5E8F8A;"></div>
<div style="left:714px;top:163px;width:73px;height:1px;background:#101a1a;"></div>
<div style="left:714px;top:163px;width:1px;height:20px;background:#101a1a;"></div>
<div style="left:713px;top:183px;width:75px;height:1px;background:#C4E6E0;"></div>
<div style="left:787px;top:162px;width:1px;height:22px;background:#C4E6E0;"></div>
<div style="left:8px;top:196px;width:988px;height:1px;background:#5E8F8A;"></div>
<div style="left:8px;top:197px;width:988px;height:1px;background:#C4E6E0;"></div>
<div style="left:16px;top:206px;width:976px;height:153px;background:#C9DFD8;"></div>
<div style="left:16px;top:206px;width:976px;height:1px;background:#101a1a;"></div>
<div style="left:16px;top:206px;width:1px;height:153px;background:#101a1a;"></div>
<div style="left:16px;top:359px;width:977px;height:1px;background:#C4E6E0;"></div>
<div style="left:992px;top:206px;width:1px;height:154px;background:#C4E6E0;"></div>
<div style="left:17px;top:207px;width:95px;height:18px;background:#8ABFB8;"></div>
<div style="left:17px;top:207px;width:95px;height:1px;background:#C4E6E0;"></div>
<div style="left:17px;top:207px;width:1px;height:18px;background:#C4E6E0;"></div>
<div style="left:111px;top:207px;width:1px;height:19px;background:#101a1a;"></div>
<span style="left:53.75px;top:211.42px;font-size:12.5px;font-weight:bold;transform:scaleX(0.9373);">Call</span>
<div style="left:112px;top:207px;width:95px;height:18px;background:#8ABFB8;"></div>
<div style="left:112px;top:207px;width:95px;height:1px;background:#C4E6E0;"></div>
<div style="left:112px;top:207px;width:1px;height:18px;background:#C4E6E0;"></div>
<div style="left:206px;top:207px;width:1px;height:19px;background:#101a1a;"></div>
<span style="left:150.70px;top:211.42px;font-size:12.5px;font-weight:bold;transform:scaleX(0.8739);">Bid</span>
<div style="left:207px;top:207px;width:95px;height:18px;background:#8ABFB8;"></div>
<div style="left:207px;top:207px;width:95px;height:1px;background:#C4E6E0;"></div>
<div style="left:207px;top:207px;width:1px;height:18px;background:#C4E6E0;"></div>
<div style="left:301px;top:207px;width:1px;height:19px;background:#101a1a;"></div>
<span style="left:244.35px;top:211.42px;font-size:12.5px;font-weight:bold;transform:scaleX(0.8850);">Ask</span>
<div style="left:302px;top:207px;width:95px;height:18px;background:#8ABFB8;"></div>
<div style="left:302px;top:207px;width:95px;height:1px;background:#C4E6E0;"></div>
<div style="left:302px;top:207px;width:1px;height:18px;background:#C4E6E0;"></div>
<div style="left:396px;top:207px;width:1px;height:19px;background:#101a1a;"></div>
<span style="left:326.05px;top:211.42px;font-size:12.5px;font-weight:bold;transform:scaleX(0.9553);">Bid Vola</span>
<div style="left:397px;top:207px;width:95px;height:18px;background:#8ABFB8;"></div>
<div style="left:397px;top:207px;width:95px;height:1px;background:#C4E6E0;"></div>
<div style="left:397px;top:207px;width:1px;height:18px;background:#C4E6E0;"></div>
<div style="left:491px;top:207px;width:1px;height:19px;background:#101a1a;"></div>
<span style="left:419.10px;top:211.42px;font-size:12.5px;font-weight:bold;transform:scaleX(0.9793);">Ask Vola</span>
<div style="left:492px;top:207px;width:95px;height:18px;background:#8ABFB8;"></div>
<div style="left:492px;top:207px;width:95px;height:1px;background:#C4E6E0;"></div>
<div style="left:492px;top:207px;width:1px;height:18px;background:#C4E6E0;"></div>
<div style="left:586px;top:207px;width:1px;height:19px;background:#101a1a;"></div>
<span style="left:524.85px;top:211.42px;font-size:12.5px;font-weight:bold;transform:scaleX(0.9582);">Delta</span>
<div style="left:587px;top:207px;width:95px;height:18px;background:#8ABFB8;"></div>
<div style="left:587px;top:207px;width:95px;height:1px;background:#C4E6E0;"></div>
<div style="left:587px;top:207px;width:1px;height:18px;background:#C4E6E0;"></div>
<div style="left:681px;top:207px;width:1px;height:19px;background:#101a1a;"></div>
<span style="left:614.20px;top:211.42px;font-size:12.5px;font-weight:bold;transform:scaleX(0.8853);">Gamma</span>
<div style="left:682px;top:207px;width:95px;height:18px;background:#8ABFB8;"></div>
<div style="left:682px;top:207px;width:95px;height:1px;background:#C4E6E0;"></div>
<div style="left:682px;top:207px;width:1px;height:18px;background:#C4E6E0;"></div>
<div style="left:776px;top:207px;width:1px;height:19px;background:#101a1a;"></div>
<span style="left:714.85px;top:211.42px;font-size:12.5px;font-weight:bold;">Vega</span>
<div style="left:17px;top:225px;width:760px;height:1px;background:#101a1a;"></div>
<div style="left:17px;top:226px;width:95px;height:18px;background:#8ABFB8;"></div>
<div style="left:17px;top:226px;width:95px;height:1px;background:#C4E6E0;"></div>
<div style="left:17px;top:226px;width:1px;height:18px;background:#C4E6E0;"></div>
<div style="left:17px;top:244px;width:95px;height:1px;background:#101a1a;"></div>
<div style="left:111px;top:225px;width:1px;height:19px;background:#101a1a;"></div>
<span style="left:45.88px;top:229.72px;font-size:12.5px;font-weight:bold;">150,00</span>
<span style="left:115.00px;top:228.38px;font-size:9px;">×</span>
<span style="left:169.55px;top:227.74px;font-size:13.3px;transform:scaleX(0.9150);">12,00</span>
<span style="left:210.00px;top:228.38px;font-size:9px;">×</span>
<span style="left:264.55px;top:227.74px;font-size:13.3px;transform:scaleX(0.9150);">12,00</span>
<span style="left:304.50px;top:228.00px;font-size:13px;">i</span>
<span style="left:363.55px;top:227.74px;font-size:13.3px;transform:scaleX(0.9150);">25,00</span>
<span style="left:399.50px;top:228.00px;font-size:13px;">i</span>
<span style="left:458.55px;top:227.74px;font-size:13.3px;transform:scaleX(0.9150);">25,00</span>
<span style="left:495.00px;top:228.38px;font-size:9px;">×</span>
<span style="left:542.49px;top:227.74px;font-size:13.3px;transform:scaleX(0.9150);">0,8142</span>
<span style="left:590.00px;top:228.38px;font-size:9px;">×</span>
<span style="left:637.49px;top:227.74px;font-size:13.3px;transform:scaleX(0.9150);">0,0207</span>
<span style="left:685.00px;top:228.38px;font-size:9px;">×</span>
<span style="left:732.49px;top:227.74px;font-size:13.3px;transform:scaleX(0.9150);">0,1382</span>
<div style="left:17px;top:245px;width:95px;height:18px;background:#8ABFB8;"></div>
<div style="left:17px;top:245px;width:95px;height:1px;background:#C4E6E0;"></div>
<div style="left:17px;top:245px;width:1px;height:18px;background:#C4E6E0;"></div>
<div style="left:17px;top:263px;width:95px;height:1px;background:#101a1a;"></div>
<div style="left:111px;top:244px;width:1px;height:19px;background:#101a1a;"></div>
<span style="left:45.88px;top:248.72px;font-size:12.5px;font-weight:bold;">155,00</span>
<div style="left:112px;top:244px;width:665px;height:1px;background:#B3CCC5;"></div>
<span style="left:115.00px;top:247.38px;font-size:9px;">×</span>
<span style="left:176.31px;top:246.74px;font-size:13.3px;transform:scaleX(0.9150);">8,38</span>
<span style="left:210.00px;top:247.38px;font-size:9px;">×</span>
<span style="left:271.31px;top:246.74px;font-size:13.3px;transform:scaleX(0.9150);">8,38</span>
<span style="left:304.50px;top:247.00px;font-size:13px;">i</span>
<span style="left:363.55px;top:246.74px;font-size:13.3px;transform:scaleX(0.9150);">25,00</span>
<span style="left:399.50px;top:247.00px;font-size:13px;">i</span>
<span style="left:458.55px;top:246.74px;font-size:13.3px;transform:scaleX(0.9150);">25,00</span>
<span style="left:495.00px;top:247.38px;font-size:9px;">×</span>
<span style="left:542.49px;top:246.74px;font-size:13.3px;transform:scaleX(0.9150);">0,6868</span>
<span style="left:590.00px;top:247.38px;font-size:9px;">×</span>
<span style="left:637.49px;top:246.74px;font-size:13.3px;transform:scaleX(0.9150);">0,0275</span>
<span style="left:685.00px;top:247.38px;font-size:9px;">×</span>
<span style="left:732.49px;top:246.74px;font-size:13.3px;transform:scaleX(0.9150);">0,1829</span>
<div style="left:17px;top:264px;width:95px;height:18px;background:#8ABFB8;"></div>
<div style="left:17px;top:264px;width:95px;height:1px;background:#C4E6E0;"></div>
<div style="left:17px;top:264px;width:1px;height:18px;background:#C4E6E0;"></div>
<div style="left:17px;top:282px;width:95px;height:1px;background:#101a1a;"></div>
<div style="left:111px;top:263px;width:1px;height:19px;background:#101a1a;"></div>
<span style="left:45.88px;top:267.72px;font-size:12.5px;font-weight:bold;">160,00</span>
<div style="left:112px;top:263px;width:665px;height:1px;background:#B3CCC5;"></div>
<span style="left:115.00px;top:266.38px;font-size:9px;">×</span>
<span style="left:176.31px;top:265.74px;font-size:13.3px;transform:scaleX(0.9150);">5,49</span>
<span style="left:210.00px;top:266.38px;font-size:9px;">×</span>
<span style="left:271.31px;top:265.74px;font-size:13.3px;transform:scaleX(0.9150);">5,49</span>
<span style="left:304.50px;top:266.00px;font-size:13px;">i</span>
<span style="left:363.55px;top:265.74px;font-size:13.3px;transform:scaleX(0.9150);">25,00</span>
<span style="left:399.50px;top:266.00px;font-size:13px;">i</span>
<span style="left:458.55px;top:265.74px;font-size:13.3px;transform:scaleX(0.9150);">25,00</span>
<span style="left:495.00px;top:266.38px;font-size:9px;">×</span>
<span style="left:542.49px;top:265.74px;font-size:13.3px;transform:scaleX(0.9150);">0,5372</span>
<span style="left:590.00px;top:266.38px;font-size:9px;">×</span>
<span style="left:637.49px;top:265.74px;font-size:13.3px;transform:scaleX(0.9150);">0,0308</span>
<span style="left:685.00px;top:266.38px;font-size:9px;">×</span>
<span style="left:732.49px;top:265.74px;font-size:13.3px;transform:scaleX(0.9150);">0,2051</span>
<div style="left:17px;top:283px;width:95px;height:18px;background:#8ABFB8;"></div>
<div style="left:17px;top:283px;width:95px;height:1px;background:#C4E6E0;"></div>
<div style="left:17px;top:283px;width:1px;height:18px;background:#C4E6E0;"></div>
<div style="left:17px;top:301px;width:95px;height:1px;background:#101a1a;"></div>
<div style="left:111px;top:282px;width:1px;height:19px;background:#101a1a;"></div>
<span style="left:45.88px;top:286.72px;font-size:12.5px;font-weight:bold;">165,00</span>
<div style="left:112px;top:282px;width:665px;height:1px;background:#B3CCC5;"></div>
<span style="left:115.00px;top:285.38px;font-size:9px;">×</span>
<span style="left:176.31px;top:284.74px;font-size:13.3px;transform:scaleX(0.9150);">3,35</span>
<span style="left:210.00px;top:285.38px;font-size:9px;">×</span>
<span style="left:271.31px;top:284.74px;font-size:13.3px;transform:scaleX(0.9150);">3,35</span>
<span style="left:304.50px;top:285.00px;font-size:13px;">i</span>
<span style="left:363.55px;top:284.74px;font-size:13.3px;transform:scaleX(0.9150);">25,00</span>
<span style="left:399.50px;top:285.00px;font-size:13px;">i</span>
<span style="left:458.55px;top:284.74px;font-size:13.3px;transform:scaleX(0.9150);">25,00</span>
<span style="left:495.00px;top:285.38px;font-size:9px;">×</span>
<span style="left:542.49px;top:284.74px;font-size:13.3px;transform:scaleX(0.9150);">0,3866</span>
<span style="left:590.00px;top:285.38px;font-size:9px;">×</span>
<span style="left:637.49px;top:284.74px;font-size:13.3px;transform:scaleX(0.9150);">0,0297</span>
<span style="left:685.00px;top:285.38px;font-size:9px;">×</span>
<span style="left:732.49px;top:284.74px;font-size:13.3px;transform:scaleX(0.9150);">0,1976</span>
<div style="left:17px;top:302px;width:95px;height:18px;background:#8ABFB8;"></div>
<div style="left:17px;top:302px;width:95px;height:1px;background:#C4E6E0;"></div>
<div style="left:17px;top:302px;width:1px;height:18px;background:#C4E6E0;"></div>
<div style="left:17px;top:320px;width:95px;height:1px;background:#101a1a;"></div>
<div style="left:111px;top:301px;width:1px;height:19px;background:#101a1a;"></div>
<span style="left:45.88px;top:305.72px;font-size:12.5px;font-weight:bold;">170,00</span>
<div style="left:112px;top:301px;width:665px;height:1px;background:#B3CCC5;"></div>
<span style="left:115.00px;top:304.38px;font-size:9px;">×</span>
<span style="left:176.31px;top:303.74px;font-size:13.3px;transform:scaleX(0.9150);">1,90</span>
<span style="left:210.00px;top:304.38px;font-size:9px;">×</span>
<span style="left:271.31px;top:303.74px;font-size:13.3px;transform:scaleX(0.9150);">1,90</span>
<span style="left:304.50px;top:304.00px;font-size:13px;">i</span>
<span style="left:363.55px;top:303.74px;font-size:13.3px;transform:scaleX(0.9150);">25,00</span>
<span style="left:399.50px;top:304.00px;font-size:13px;">i</span>
<span style="left:458.55px;top:303.74px;font-size:13.3px;transform:scaleX(0.9150);">25,00</span>
<span style="left:495.00px;top:304.38px;font-size:9px;">×</span>
<span style="left:542.49px;top:303.74px;font-size:13.3px;transform:scaleX(0.9150);">0,2552</span>
<span style="left:590.00px;top:304.38px;font-size:9px;">×</span>
<span style="left:637.49px;top:303.74px;font-size:13.3px;transform:scaleX(0.9150);">0,0249</span>
<span style="left:685.00px;top:304.38px;font-size:9px;">×</span>
<span style="left:732.49px;top:303.74px;font-size:13.3px;transform:scaleX(0.9150);">0,1658</span>
<div style="left:17px;top:321px;width:95px;height:18px;background:#8ABFB8;"></div>
<div style="left:17px;top:321px;width:95px;height:1px;background:#C4E6E0;"></div>
<div style="left:17px;top:321px;width:1px;height:18px;background:#C4E6E0;"></div>
<div style="left:17px;top:339px;width:95px;height:1px;background:#101a1a;"></div>
<div style="left:111px;top:320px;width:1px;height:19px;background:#101a1a;"></div>
<span style="left:45.88px;top:324.72px;font-size:12.5px;font-weight:bold;">175,00</span>
<div style="left:112px;top:320px;width:665px;height:1px;background:#B3CCC5;"></div>
<span style="left:115.00px;top:323.38px;font-size:9px;">×</span>
<span style="left:176.31px;top:322.74px;font-size:13.3px;transform:scaleX(0.9150);">1,00</span>
<span style="left:210.00px;top:322.54px;font-size:10px;">~</span>
<span style="left:271.31px;top:322.74px;font-size:13.3px;transform:scaleX(0.9150);">1,00</span>
<span style="left:304.50px;top:323.00px;font-size:13px;">i</span>
<span style="left:363.55px;top:322.74px;font-size:13.3px;transform:scaleX(0.9150);">25,00</span>
<span style="left:400.00px;top:323.38px;font-size:9px;">×</span>
<span style="left:453.95px;top:322.74px;font-size:13.3px;transform:scaleX(0.9150);">24,97</span>
<span style="left:495.00px;top:323.38px;font-size:9px;">×</span>
<span style="left:542.49px;top:322.74px;font-size:13.3px;transform:scaleX(0.9150);">0,1543</span>
<span style="left:590.00px;top:323.38px;font-size:9px;">×</span>
<span style="left:637.49px;top:322.74px;font-size:13.3px;transform:scaleX(0.9150);">0,0184</span>
<span style="left:685.00px;top:323.38px;font-size:9px;">×</span>
<span style="left:732.49px;top:322.74px;font-size:13.3px;transform:scaleX(0.9150);">0,1226</span>
<div style="left:17px;top:340px;width:95px;height:18px;background:#8ABFB8;"></div>
<div style="left:17px;top:340px;width:95px;height:1px;background:#C4E6E0;"></div>
<div style="left:17px;top:340px;width:1px;height:18px;background:#C4E6E0;"></div>
<div style="left:17px;top:358px;width:95px;height:1px;background:#101a1a;"></div>
<div style="left:111px;top:339px;width:1px;height:19px;background:#101a1a;"></div>
<span style="left:45.88px;top:343.72px;font-size:12.5px;font-weight:bold;">180,00</span>
<div style="left:112px;top:339px;width:665px;height:1px;background:#B3CCC5;"></div>
<span style="left:115.00px;top:342.38px;font-size:9px;">×</span>
<span style="left:176.31px;top:341.74px;font-size:13.3px;transform:scaleX(0.9150);">0,49</span>
<span style="left:210.00px;top:342.38px;font-size:9px;">×</span>
<span style="left:271.31px;top:341.74px;font-size:13.3px;transform:scaleX(0.9150);">0,49</span>
<span style="left:304.50px;top:342.00px;font-size:13px;">i</span>
<span style="left:363.55px;top:341.74px;font-size:13.3px;transform:scaleX(0.9150);">25,00</span>
<span style="left:399.50px;top:342.00px;font-size:13px;">i</span>
<span style="left:458.55px;top:341.74px;font-size:13.3px;transform:scaleX(0.9150);">25,00</span>
<span style="left:495.00px;top:342.38px;font-size:9px;">×</span>
<span style="left:542.49px;top:341.74px;font-size:13.3px;transform:scaleX(0.9150);">0,0858</span>
<span style="left:590.00px;top:342.38px;font-size:9px;">×</span>
<span style="left:637.49px;top:341.74px;font-size:13.3px;transform:scaleX(0.9150);">0,0121</span>
<span style="left:685.00px;top:342.38px;font-size:9px;">×</span>
<span style="left:732.49px;top:341.74px;font-size:13.3px;transform:scaleX(0.9150);">0,0809</span>
<div style="left:206px;top:226px;width:1px;height:133px;background:#B3CCC5;"></div>
<div style="left:301px;top:226px;width:1px;height:133px;background:#B3CCC5;"></div>
<div style="left:396px;top:226px;width:1px;height:133px;background:#B3CCC5;"></div>
<div style="left:491px;top:226px;width:1px;height:133px;background:#B3CCC5;"></div>
<div style="left:586px;top:226px;width:1px;height:133px;background:#B3CCC5;"></div>
<div style="left:681px;top:226px;width:1px;height:133px;background:#B3CCC5;"></div>
<div style="left:776px;top:226px;width:1px;height:133px;background:#B3CCC5;"></div>
<div class="hatch" style="left:976px;top:207px;width:16px;height:152px;"></div>
<div style="left:976px;top:207px;width:16px;height:16px;background:#8ABFB8;"></div>
<div style="left:976px;top:207px;width:16px;height:1px;background:#C4E6E0;"></div>
<div style="left:976px;top:207px;width:1px;height:16px;background:#C4E6E0;"></div>
<div style="left:976px;top:222px;width:16px;height:1px;background:#101a1a;"></div>
<div style="left:991px;top:207px;width:1px;height:16px;background:#101a1a;"></div>
<div style="left:976px;top:343px;width:16px;height:16px;background:#8ABFB8;"></div>
<div style="left:976px;top:343px;width:16px;height:1px;background:#C4E6E0;"></div>
<div style="left:976px;top:343px;width:1px;height:16px;background:#C4E6E0;"></div>
<div style="left:976px;top:358px;width:16px;height:1px;background:#101a1a;"></div>
<div style="left:991px;top:343px;width:1px;height:16px;background:#101a1a;"></div>
<svg style="left:976px;top:207px" width="16" height="16"><path d="M4 10 L12 10 L8 6Z" fill="#000"/></svg>
<svg style="left:976px;top:343px" width="16" height="16"><path d="M4 6 L12 6 L8 10Z" fill="#000"/></svg>
<div style="left:976px;top:281px;width:16px;height:15px;background:#8ABFB8;"></div>
<div style="left:976px;top:281px;width:16px;height:1px;background:#C4E6E0;"></div>
<div style="left:976px;top:281px;width:1px;height:15px;background:#C4E6E0;"></div>
<div style="left:976px;top:295px;width:16px;height:1px;background:#101a1a;"></div>
<div style="left:991px;top:281px;width:1px;height:15px;background:#101a1a;"></div>
<div style="left:16px;top:370px;width:976px;height:153px;background:#C9DFD8;"></div>
<div style="left:16px;top:370px;width:976px;height:1px;background:#101a1a;"></div>
<div style="left:16px;top:370px;width:1px;height:153px;background:#101a1a;"></div>
<div style="left:16px;top:523px;width:977px;height:1px;background:#C4E6E0;"></div>
<div style="left:992px;top:370px;width:1px;height:154px;background:#C4E6E0;"></div>
<div style="left:17px;top:371px;width:95px;height:18px;background:#8ABFB8;"></div>
<div style="left:17px;top:371px;width:95px;height:1px;background:#C4E6E0;"></div>
<div style="left:17px;top:371px;width:1px;height:18px;background:#C4E6E0;"></div>
<div style="left:111px;top:371px;width:1px;height:19px;background:#101a1a;"></div>
<span style="left:55.30px;top:375.42px;font-size:12.5px;font-weight:bold;transform:scaleX(0.9136);">Put</span>
<div style="left:112px;top:371px;width:95px;height:18px;background:#8ABFB8;"></div>
<div style="left:112px;top:371px;width:95px;height:1px;background:#C4E6E0;"></div>
<div style="left:112px;top:371px;width:1px;height:18px;background:#C4E6E0;"></div>
<div style="left:206px;top:371px;width:1px;height:19px;background:#101a1a;"></div>
<span style="left:150.70px;top:375.42px;font-size:12.5px;font-weight:bold;transform:scaleX(0.8739);">Bid</span>
<div style="left:207px;top:371px;width:95px;height:18px;background:#8ABFB8;"></div>
<div style="left:207px;top:371px;width:95px;height:1px;background:#C4E6E0;"></div>
<div style="left:207px;top:371px;width:1px;height:18px;background:#C4E6E0;"></div>
<div style="left:301px;top:371px;width:1px;height:19px;background:#101a1a;"></div>
<span style="left:244.35px;top:375.42px;font-size:12.5px;font-weight:bold;transform:scaleX(0.8850);">Ask</span>
<div style="left:302px;top:371px;width:95px;height:18px;background:#8ABFB8;"></div>
<div style="left:302px;top:371px;width:95px;height:1px;background:#C4E6E0;"></div>
<div style="left:302px;top:371px;width:1px;height:18px;background:#C4E6E0;"></div>
<div style="left:396px;top:371px;width:1px;height:19px;background:#101a1a;"></div>
<span style="left:326.05px;top:375.42px;font-size:12.5px;font-weight:bold;transform:scaleX(0.9553);">Bid Vola</span>
<div style="left:397px;top:371px;width:95px;height:18px;background:#8ABFB8;"></div>
<div style="left:397px;top:371px;width:95px;height:1px;background:#C4E6E0;"></div>
<div style="left:397px;top:371px;width:1px;height:18px;background:#C4E6E0;"></div>
<div style="left:491px;top:371px;width:1px;height:19px;background:#101a1a;"></div>
<span style="left:419.10px;top:375.42px;font-size:12.5px;font-weight:bold;transform:scaleX(0.9793);">Ask Vola</span>
<div style="left:492px;top:371px;width:95px;height:18px;background:#8ABFB8;"></div>
<div style="left:492px;top:371px;width:95px;height:1px;background:#C4E6E0;"></div>
<div style="left:492px;top:371px;width:1px;height:18px;background:#C4E6E0;"></div>
<div style="left:586px;top:371px;width:1px;height:19px;background:#101a1a;"></div>
<span style="left:524.85px;top:375.42px;font-size:12.5px;font-weight:bold;transform:scaleX(0.9582);">Delta</span>
<div style="left:587px;top:371px;width:95px;height:18px;background:#8ABFB8;"></div>
<div style="left:587px;top:371px;width:95px;height:1px;background:#C4E6E0;"></div>
<div style="left:587px;top:371px;width:1px;height:18px;background:#C4E6E0;"></div>
<div style="left:681px;top:371px;width:1px;height:19px;background:#101a1a;"></div>
<span style="left:614.20px;top:375.42px;font-size:12.5px;font-weight:bold;transform:scaleX(0.8853);">Gamma</span>
<div style="left:682px;top:371px;width:95px;height:18px;background:#8ABFB8;"></div>
<div style="left:682px;top:371px;width:95px;height:1px;background:#C4E6E0;"></div>
<div style="left:682px;top:371px;width:1px;height:18px;background:#C4E6E0;"></div>
<div style="left:776px;top:371px;width:1px;height:19px;background:#101a1a;"></div>
<span style="left:714.85px;top:375.42px;font-size:12.5px;font-weight:bold;">Vega</span>
<div style="left:17px;top:389px;width:760px;height:1px;background:#101a1a;"></div>
<div style="left:17px;top:390px;width:95px;height:18px;background:#8ABFB8;"></div>
<div style="left:17px;top:390px;width:95px;height:1px;background:#C4E6E0;"></div>
<div style="left:17px;top:390px;width:1px;height:18px;background:#C4E6E0;"></div>
<div style="left:17px;top:408px;width:95px;height:1px;background:#101a1a;"></div>
<div style="left:111px;top:389px;width:1px;height:19px;background:#101a1a;"></div>
<span style="left:45.88px;top:393.72px;font-size:12.5px;font-weight:bold;">140,00</span>
<span style="left:115.00px;top:392.38px;font-size:9px;">×</span>
<span style="left:176.31px;top:391.74px;font-size:13.3px;transform:scaleX(0.9150);">0,22</span>
<span style="left:210.00px;top:392.38px;font-size:9px;">×</span>
<span style="left:271.31px;top:391.74px;font-size:13.3px;transform:scaleX(0.9150);">0,22</span>
<span style="left:304.50px;top:392.00px;font-size:13px;">i</span>
<span style="left:363.55px;top:391.74px;font-size:13.3px;transform:scaleX(0.9150);">25,00</span>
<span style="left:399.50px;top:392.00px;font-size:13px;">i</span>
<span style="left:458.55px;top:391.74px;font-size:13.3px;transform:scaleX(0.9150);">25,00</span>
<span style="left:495.00px;top:392.38px;font-size:9px;">×</span>
<span style="left:538.42px;top:391.74px;font-size:13.3px;transform:scaleX(0.9150);">-0,0402</span>
<span style="left:590.00px;top:392.38px;font-size:9px;">×</span>
<span style="left:637.49px;top:391.74px;font-size:13.3px;transform:scaleX(0.9150);">0,0067</span>
<span style="left:685.00px;top:392.38px;font-size:9px;">×</span>
<span style="left:732.49px;top:391.74px;font-size:13.3px;transform:scaleX(0.9150);">0,0446</span>
<div style="left:17px;top:409px;width:95px;height:18px;background:#8ABFB8;"></div>
<div style="left:17px;top:409px;width:95px;height:1px;background:#C4E6E0;"></div>
<div style="left:17px;top:409px;width:1px;height:18px;background:#C4E6E0;"></div>
<div style="left:17px;top:427px;width:95px;height:1px;background:#101a1a;"></div>
<div style="left:111px;top:408px;width:1px;height:19px;background:#101a1a;"></div>
<span style="left:45.88px;top:412.72px;font-size:12.5px;font-weight:bold;">145,00</span>
<div style="left:112px;top:408px;width:665px;height:1px;background:#B3CCC5;"></div>
<span style="left:115.00px;top:411.38px;font-size:9px;">×</span>
<span style="left:176.31px;top:410.74px;font-size:13.3px;transform:scaleX(0.9150);">0,59</span>
<span style="left:210.00px;top:411.38px;font-size:9px;">×</span>
<span style="left:271.31px;top:410.74px;font-size:13.3px;transform:scaleX(0.9150);">0,59</span>
<span style="left:304.50px;top:411.00px;font-size:13px;">i</span>
<span style="left:363.55px;top:410.74px;font-size:13.3px;transform:scaleX(0.9150);">25,00</span>
<span style="left:399.50px;top:411.00px;font-size:13px;">i</span>
<span style="left:458.55px;top:410.74px;font-size:13.3px;transform:scaleX(0.9150);">25,00</span>
<span style="left:495.00px;top:411.38px;font-size:9px;">×</span>
<span style="left:538.42px;top:410.74px;font-size:13.3px;transform:scaleX(0.9150);">-0,0945</span>
<span style="left:590.00px;top:411.38px;font-size:9px;">×</span>
<span style="left:637.49px;top:410.74px;font-size:13.3px;transform:scaleX(0.9150);">0,0130</span>
<span style="left:685.00px;top:411.38px;font-size:9px;">×</span>
<span style="left:732.49px;top:410.74px;font-size:13.3px;transform:scaleX(0.9150);">0,0869</span>
<div style="left:17px;top:428px;width:95px;height:18px;background:#8ABFB8;"></div>
<div style="left:17px;top:428px;width:95px;height:1px;background:#C4E6E0;"></div>
<div style="left:17px;top:428px;width:1px;height:18px;background:#C4E6E0;"></div>
<div style="left:17px;top:446px;width:95px;height:1px;background:#101a1a;"></div>
<div style="left:111px;top:427px;width:1px;height:19px;background:#101a1a;"></div>
<span style="left:45.88px;top:431.72px;font-size:12.5px;font-weight:bold;">150,00</span>
<div style="left:112px;top:427px;width:665px;height:1px;background:#B3CCC5;"></div>
<span style="left:115.00px;top:430.38px;font-size:9px;">×</span>
<span style="left:176.31px;top:429.74px;font-size:13.3px;transform:scaleX(0.9150);">1,36</span>
<span style="left:210.00px;top:430.38px;font-size:9px;">×</span>
<span style="left:271.31px;top:429.74px;font-size:13.3px;transform:scaleX(0.9150);">1,36</span>
<span style="left:304.50px;top:430.00px;font-size:13px;">i</span>
<span style="left:363.55px;top:429.74px;font-size:13.3px;transform:scaleX(0.9150);">25,00</span>
<span style="left:399.50px;top:430.00px;font-size:13px;">i</span>
<span style="left:458.55px;top:429.74px;font-size:13.3px;transform:scaleX(0.9150);">25,00</span>
<span style="left:495.00px;top:430.38px;font-size:9px;">×</span>
<span style="left:538.42px;top:429.74px;font-size:13.3px;transform:scaleX(0.9150);">-0,1858</span>
<span style="left:590.00px;top:430.38px;font-size:9px;">×</span>
<span style="left:637.49px;top:429.74px;font-size:13.3px;transform:scaleX(0.9150);">0,0207</span>
<span style="left:685.00px;top:430.38px;font-size:9px;">×</span>
<span style="left:732.49px;top:429.74px;font-size:13.3px;transform:scaleX(0.9150);">0,1382</span>
<div style="left:17px;top:447px;width:95px;height:18px;background:#8ABFB8;"></div>
<div style="left:17px;top:447px;width:95px;height:1px;background:#C4E6E0;"></div>
<div style="left:17px;top:447px;width:1px;height:18px;background:#C4E6E0;"></div>
<div style="left:17px;top:465px;width:95px;height:1px;background:#101a1a;"></div>
<div style="left:111px;top:446px;width:1px;height:19px;background:#101a1a;"></div>
<span style="left:45.88px;top:450.72px;font-size:12.5px;font-weight:bold;">155,00</span>
<div style="left:112px;top:446px;width:665px;height:1px;background:#B3CCC5;"></div>
<span style="left:115.00px;top:449.38px;font-size:9px;">×</span>
<span style="left:176.31px;top:448.74px;font-size:13.3px;transform:scaleX(0.9150);">2,72</span>
<span style="left:210.00px;top:449.38px;font-size:9px;">×</span>
<span style="left:271.31px;top:448.74px;font-size:13.3px;transform:scaleX(0.9150);">2,72</span>
<span style="left:304.50px;top:449.00px;font-size:13px;">i</span>
<span style="left:363.55px;top:448.74px;font-size:13.3px;transform:scaleX(0.9150);">25,00</span>
<span style="left:399.50px;top:449.00px;font-size:13px;">i</span>
<span style="left:458.55px;top:448.74px;font-size:13.3px;transform:scaleX(0.9150);">25,00</span>
<span style="left:495.00px;top:449.38px;font-size:9px;">×</span>
<span style="left:538.42px;top:448.74px;font-size:13.3px;transform:scaleX(0.9150);">-0,3132</span>
<span style="left:590.00px;top:449.38px;font-size:9px;">×</span>
<span style="left:637.49px;top:448.74px;font-size:13.3px;transform:scaleX(0.9150);">0,0275</span>
<span style="left:685.00px;top:449.38px;font-size:9px;">×</span>
<span style="left:732.49px;top:448.74px;font-size:13.3px;transform:scaleX(0.9150);">0,1829</span>
<div style="left:17px;top:466px;width:95px;height:18px;background:#8ABFB8;"></div>
<div style="left:17px;top:466px;width:95px;height:1px;background:#C4E6E0;"></div>
<div style="left:17px;top:466px;width:1px;height:18px;background:#C4E6E0;"></div>
<div style="left:17px;top:484px;width:95px;height:1px;background:#101a1a;"></div>
<div style="left:111px;top:465px;width:1px;height:19px;background:#101a1a;"></div>
<span style="left:45.88px;top:469.72px;font-size:12.5px;font-weight:bold;">160,00</span>
<div style="left:112px;top:465px;width:665px;height:1px;background:#B3CCC5;"></div>
<span style="left:115.00px;top:468.38px;font-size:9px;">×</span>
<span style="left:176.31px;top:467.74px;font-size:13.3px;transform:scaleX(0.9150);">4,80</span>
<span style="left:210.00px;top:468.38px;font-size:9px;">×</span>
<span style="left:271.31px;top:467.74px;font-size:13.3px;transform:scaleX(0.9150);">4,80</span>
<span style="left:304.50px;top:468.00px;font-size:13px;">i</span>
<span style="left:363.55px;top:467.74px;font-size:13.3px;transform:scaleX(0.9150);">25,00</span>
<span style="left:399.50px;top:468.00px;font-size:13px;">i</span>
<span style="left:458.55px;top:467.74px;font-size:13.3px;transform:scaleX(0.9150);">25,00</span>
<span style="left:495.00px;top:468.38px;font-size:9px;">×</span>
<span style="left:538.42px;top:467.74px;font-size:13.3px;transform:scaleX(0.9150);">-0,4628</span>
<span style="left:590.00px;top:468.38px;font-size:9px;">×</span>
<span style="left:637.49px;top:467.74px;font-size:13.3px;transform:scaleX(0.9150);">0,0308</span>
<span style="left:685.00px;top:468.38px;font-size:9px;">×</span>
<span style="left:732.49px;top:467.74px;font-size:13.3px;transform:scaleX(0.9150);">0,2051</span>
<div style="left:17px;top:485px;width:95px;height:18px;background:#8ABFB8;"></div>
<div style="left:17px;top:485px;width:95px;height:1px;background:#C4E6E0;"></div>
<div style="left:17px;top:485px;width:1px;height:18px;background:#C4E6E0;"></div>
<div style="left:17px;top:503px;width:95px;height:1px;background:#101a1a;"></div>
<div style="left:111px;top:484px;width:1px;height:19px;background:#101a1a;"></div>
<span style="left:45.88px;top:488.72px;font-size:12.5px;font-weight:bold;">165,00</span>
<div style="left:112px;top:484px;width:665px;height:1px;background:#B3CCC5;"></div>
<span style="left:115.00px;top:487.38px;font-size:9px;">×</span>
<span style="left:176.31px;top:486.74px;font-size:13.3px;transform:scaleX(0.9150);">7,64</span>
<span style="left:210.00px;top:487.38px;font-size:9px;">×</span>
<span style="left:271.31px;top:486.74px;font-size:13.3px;transform:scaleX(0.9150);">7,64</span>
<span style="left:304.50px;top:487.00px;font-size:13px;">i</span>
<span style="left:363.55px;top:486.74px;font-size:13.3px;transform:scaleX(0.9150);">25,00</span>
<span style="left:399.50px;top:487.00px;font-size:13px;">i</span>
<span style="left:458.55px;top:486.74px;font-size:13.3px;transform:scaleX(0.9150);">25,00</span>
<span style="left:495.00px;top:487.38px;font-size:9px;">×</span>
<span style="left:538.42px;top:486.74px;font-size:13.3px;transform:scaleX(0.9150);">-0,6134</span>
<span style="left:590.00px;top:487.38px;font-size:9px;">×</span>
<span style="left:637.49px;top:486.74px;font-size:13.3px;transform:scaleX(0.9150);">0,0297</span>
<span style="left:685.00px;top:487.38px;font-size:9px;">×</span>
<span style="left:732.49px;top:486.74px;font-size:13.3px;transform:scaleX(0.9150);">0,1976</span>
<div style="left:17px;top:504px;width:95px;height:18px;background:#8ABFB8;"></div>
<div style="left:17px;top:504px;width:95px;height:1px;background:#C4E6E0;"></div>
<div style="left:17px;top:504px;width:1px;height:18px;background:#C4E6E0;"></div>
<div style="left:17px;top:522px;width:95px;height:1px;background:#101a1a;"></div>
<div style="left:111px;top:503px;width:1px;height:19px;background:#101a1a;"></div>
<span style="left:45.88px;top:507.72px;font-size:12.5px;font-weight:bold;">170,00</span>
<div style="left:112px;top:503px;width:665px;height:1px;background:#B3CCC5;"></div>
<span style="left:115.00px;top:506.38px;font-size:9px;">×</span>
<span style="left:170.45px;top:505.74px;font-size:13.3px;transform:scaleX(0.9150);">11,18</span>
<span style="left:210.00px;top:506.38px;font-size:9px;">×</span>
<span style="left:265.45px;top:505.74px;font-size:13.3px;transform:scaleX(0.9150);">11,18</span>
<span style="left:304.50px;top:506.00px;font-size:13px;">i</span>
<span style="left:363.55px;top:505.74px;font-size:13.3px;transform:scaleX(0.9150);">25,00</span>
<span style="left:399.50px;top:506.00px;font-size:13px;">i</span>
<span style="left:458.55px;top:505.74px;font-size:13.3px;transform:scaleX(0.9150);">25,00</span>
<span style="left:495.00px;top:506.38px;font-size:9px;">×</span>
<span style="left:538.42px;top:505.74px;font-size:13.3px;transform:scaleX(0.9150);">-0,7448</span>
<span style="left:590.00px;top:506.38px;font-size:9px;">×</span>
<span style="left:637.49px;top:505.74px;font-size:13.3px;transform:scaleX(0.9150);">0,0249</span>
<span style="left:685.00px;top:506.38px;font-size:9px;">×</span>
<span style="left:732.49px;top:505.74px;font-size:13.3px;transform:scaleX(0.9150);">0,1658</span>
<div style="left:206px;top:390px;width:1px;height:133px;background:#B3CCC5;"></div>
<div style="left:301px;top:390px;width:1px;height:133px;background:#B3CCC5;"></div>
<div style="left:396px;top:390px;width:1px;height:133px;background:#B3CCC5;"></div>
<div style="left:491px;top:390px;width:1px;height:133px;background:#B3CCC5;"></div>
<div style="left:586px;top:390px;width:1px;height:133px;background:#B3CCC5;"></div>
<div style="left:681px;top:390px;width:1px;height:133px;background:#B3CCC5;"></div>
<div style="left:776px;top:390px;width:1px;height:133px;background:#B3CCC5;"></div>
<div class="hatch" style="left:976px;top:371px;width:16px;height:152px;"></div>
<div style="left:976px;top:371px;width:16px;height:16px;background:#8ABFB8;"></div>
<div style="left:976px;top:371px;width:16px;height:1px;background:#C4E6E0;"></div>
<div style="left:976px;top:371px;width:1px;height:16px;background:#C4E6E0;"></div>
<div style="left:976px;top:386px;width:16px;height:1px;background:#101a1a;"></div>
<div style="left:991px;top:371px;width:1px;height:16px;background:#101a1a;"></div>
<div style="left:976px;top:507px;width:16px;height:16px;background:#8ABFB8;"></div>
<div style="left:976px;top:507px;width:16px;height:1px;background:#C4E6E0;"></div>
<div style="left:976px;top:507px;width:1px;height:16px;background:#C4E6E0;"></div>
<div style="left:976px;top:522px;width:16px;height:1px;background:#101a1a;"></div>
<div style="left:991px;top:507px;width:1px;height:16px;background:#101a1a;"></div>
<svg style="left:976px;top:371px" width="16" height="16"><path d="M4 10 L12 10 L8 6Z" fill="#000"/></svg>
<svg style="left:976px;top:507px" width="16" height="16"><path d="M4 6 L12 6 L8 10Z" fill="#000"/></svg>
<div style="left:976px;top:433px;width:16px;height:15px;background:#8ABFB8;"></div>
<div style="left:976px;top:433px;width:16px;height:1px;background:#C4E6E0;"></div>
<div style="left:976px;top:433px;width:1px;height:15px;background:#C4E6E0;"></div>
<div style="left:976px;top:447px;width:16px;height:1px;background:#101a1a;"></div>
<div style="left:991px;top:433px;width:1px;height:15px;background:#101a1a;"></div>
<div style="left:8px;top:530px;width:988px;height:1px;background:#5E8F8A;"></div>
<div style="left:8px;top:531px;width:988px;height:1px;background:#C4E6E0;"></div>
<div style="left:17px;top:538px;width:519px;height:172px;background:#C9DFD8;"></div>
<div style="left:17px;top:538px;width:519px;height:1px;background:#101a1a;"></div>
<div style="left:17px;top:538px;width:1px;height:172px;background:#101a1a;"></div>
<div style="left:17px;top:539px;width:519px;height:1px;background:#5E8F8A;"></div>
<div style="left:18px;top:539px;width:1px;height:170px;background:#5E8F8A;"></div>
<div style="left:17px;top:710px;width:520px;height:1px;background:#C4E6E0;"></div>
<div style="left:536px;top:538px;width:1px;height:173px;background:#C4E6E0;"></div>
<div style="left:19px;top:540px;width:110px;height:20px;background:#8ABFB8;"></div>
<div style="left:19px;top:540px;width:110px;height:1px;background:#C4E6E0;"></div>
<div style="left:19px;top:540px;width:1px;height:20px;background:#C4E6E0;"></div>
<div style="left:128px;top:540px;width:1px;height:21px;background:#101a1a;"></div>
<span style="left:44.07px;top:546.04px;font-size:12px;font-weight:bold;transform:scaleX(0.9550);">Underlying</span>
<div style="left:129px;top:540px;width:83px;height:20px;background:#8ABFB8;"></div>
<div style="left:129px;top:540px;width:83px;height:1px;background:#C4E6E0;"></div>
<div style="left:129px;top:540px;width:1px;height:20px;background:#C4E6E0;"></div>
<div style="left:211px;top:540px;width:1px;height:21px;background:#101a1a;"></div>
<span style="left:154.57px;top:546.04px;font-size:12px;font-weight:bold;transform:scaleX(0.9550);">Strike</span>
<div style="left:212px;top:540px;width:98px;height:20px;background:#8ABFB8;"></div>
<div style="left:212px;top:540px;width:98px;height:1px;background:#C4E6E0;"></div>
<div style="left:212px;top:540px;width:1px;height:20px;background:#C4E6E0;"></div>
<div style="left:309px;top:540px;width:1px;height:21px;background:#101a1a;"></div>
<span style="left:239.67px;top:546.04px;font-size:12px;font-weight:bold;transform:scaleX(0.9550);">Call/Put</span>
<div style="left:310px;top:540px;width:64px;height:20px;background:#8ABFB8;"></div>
<div style="left:310px;top:540px;width:64px;height:1px;background:#C4E6E0;"></div>
<div style="left:310px;top:540px;width:1px;height:20px;background:#C4E6E0;"></div>
<div style="left:373px;top:540px;width:1px;height:21px;background:#101a1a;"></div>
<span style="left:320.35px;top:546.04px;font-size:12px;font-weight:bold;transform:scaleX(0.9550);">Number</span>
<div style="left:374px;top:540px;width:64px;height:20px;background:#8ABFB8;"></div>
<div style="left:374px;top:540px;width:64px;height:1px;background:#C4E6E0;"></div>
<div style="left:374px;top:540px;width:1px;height:20px;background:#C4E6E0;"></div>
<div style="left:437px;top:540px;width:1px;height:21px;background:#101a1a;"></div>
<span style="left:392.30px;top:546.04px;font-size:12px;font-weight:bold;transform:scaleX(0.9550);">Days</span>
<div style="left:438px;top:540px;width:64px;height:20px;background:#8ABFB8;"></div>
<div style="left:438px;top:540px;width:64px;height:1px;background:#C4E6E0;"></div>
<div style="left:438px;top:540px;width:1px;height:20px;background:#C4E6E0;"></div>
<div style="left:501px;top:540px;width:1px;height:21px;background:#101a1a;"></div>
<span style="left:455.98px;top:546.04px;font-size:12px;font-weight:bold;transform:scaleX(0.9550);">Price</span>
<div style="left:19px;top:560px;width:483px;height:1px;background:#101a1a;"></div>
<span style="left:99.27px;top:564.60px;font-size:13px;">ADS</span>
<span style="left:171.02px;top:564.60px;font-size:13px;transform:scaleX(0.9550);">160,00</span>
<span style="left:249.92px;top:564.60px;font-size:13px;">Short Call</span>
<span style="left:364.09px;top:564.60px;font-size:13px;transform:scaleX(0.9550);">5</span>
<span style="left:421.18px;top:564.60px;font-size:13px;transform:scaleX(0.9550);">10</span>
<span style="left:474.83px;top:564.60px;font-size:13px;transform:scaleX(0.9550);">2,73</span>
<div style="left:19px;top:582px;width:483px;height:1px;background:#B3CCC5;"></div>
<span style="left:99.27px;top:585.60px;font-size:13px;">ADS</span>
<span style="left:171.02px;top:585.60px;font-size:13px;transform:scaleX(0.9550);">160,00</span>
<span style="left:252.80px;top:585.60px;font-size:13px;">Short Put</span>
<span style="left:364.09px;top:585.60px;font-size:13px;transform:scaleX(0.9550);">5</span>
<span style="left:421.18px;top:585.60px;font-size:13px;transform:scaleX(0.9550);">10</span>
<span style="left:474.83px;top:585.60px;font-size:13px;transform:scaleX(0.9550);">2,55</span>
<div style="left:19px;top:603px;width:483px;height:1px;background:#B3CCC5;"></div>
<span style="left:99.27px;top:606.60px;font-size:13px;">ADS</span>
<span style="left:171.02px;top:606.60px;font-size:13px;transform:scaleX(0.9550);">175,00</span>
<span style="left:252.06px;top:606.60px;font-size:13px;">Long Call</span>
<span style="left:357.18px;top:606.60px;font-size:13px;transform:scaleX(0.9550);">16</span>
<span style="left:421.18px;top:606.60px;font-size:13px;transform:scaleX(0.9550);">38</span>
<span style="left:474.83px;top:606.60px;font-size:13px;transform:scaleX(0.9550);">1,00</span>
<div style="left:18px;top:624px;width:484px;height:20px;background:#0A0A8A;"></div>
<span style="left:99.27px;top:627.60px;font-size:13px;color:#fff;">ADS</span>
<span style="left:171.02px;top:627.60px;font-size:13px;color:#fff;transform:scaleX(0.9550);">145,00</span>
<span style="left:254.95px;top:627.60px;font-size:13px;color:#fff;">Long Put</span>
<span style="left:357.18px;top:627.60px;font-size:13px;color:#fff;transform:scaleX(0.9550);">21</span>
<span style="left:421.18px;top:627.60px;font-size:13px;color:#fff;transform:scaleX(0.9550);">38</span>
<span style="left:474.83px;top:627.60px;font-size:13px;color:#fff;transform:scaleX(0.9550);">0,59</span>
<div style="left:128px;top:561px;width:1px;height:63px;background:#B3CCC5;"></div>
<div style="left:128px;top:624px;width:1px;height:20px;background:#B0B4E0;"></div>
<div style="left:211px;top:561px;width:1px;height:63px;background:#B3CCC5;"></div>
<div style="left:211px;top:624px;width:1px;height:20px;background:#B0B4E0;"></div>
<div style="left:309px;top:561px;width:1px;height:63px;background:#B3CCC5;"></div>
<div style="left:309px;top:624px;width:1px;height:20px;background:#B0B4E0;"></div>
<div style="left:373px;top:561px;width:1px;height:63px;background:#B3CCC5;"></div>
<div style="left:373px;top:624px;width:1px;height:20px;background:#B0B4E0;"></div>
<div style="left:437px;top:561px;width:1px;height:63px;background:#B3CCC5;"></div>
<div style="left:437px;top:624px;width:1px;height:20px;background:#B0B4E0;"></div>
<div style="left:501px;top:561px;width:1px;height:63px;background:#B3CCC5;"></div>
<div style="left:501px;top:624px;width:1px;height:20px;background:#B0B4E0;"></div>
<div style="left:15px;top:717px;width:49px;height:24px;background:#8ABFB8;"></div>
<div style="left:15px;top:717px;width:49px;height:1px;background:#C4E6E0;"></div>
<div style="left:15px;top:717px;width:1px;height:24px;background:#C4E6E0;"></div>
<div style="left:15px;top:740px;width:49px;height:1px;background:#101a1a;"></div>
<div style="left:63px;top:717px;width:1px;height:24px;background:#101a1a;"></div>
<div style="left:16px;top:739px;width:47px;height:1px;background:#5E8F8A;"></div>
<div style="left:62px;top:718px;width:1px;height:22px;background:#5E8F8A;"></div>
<span style="left:28.50px;top:722.57px;font-size:13.5px;transform:scaleX(1.0115);">PW</span>
<div style="left:66px;top:717px;width:50px;height:24px;background:#8ABFB8;"></div>
<div style="left:66px;top:717px;width:50px;height:1px;background:#C4E6E0;"></div>
<div style="left:66px;top:717px;width:1px;height:24px;background:#C4E6E0;"></div>
<div style="left:66px;top:740px;width:50px;height:1px;background:#101a1a;"></div>
<div style="left:115px;top:717px;width:1px;height:24px;background:#101a1a;"></div>
<div style="left:67px;top:739px;width:48px;height:1px;background:#5E8F8A;"></div>
<div style="left:114px;top:718px;width:1px;height:22px;background:#5E8F8A;"></div>
<span style="left:81.50px;top:722.57px;font-size:13.5px;transform:scaleX(1.0125);">PR</span>
<div style="left:123px;top:717px;width:95px;height:24px;background:#8ABFB8;"></div>
<div style="left:123px;top:717px;width:95px;height:1px;background:#C4E6E0;"></div>
<div style="left:123px;top:717px;width:1px;height:24px;background:#C4E6E0;"></div>
<div style="left:123px;top:740px;width:95px;height:1px;background:#101a1a;"></div>
<div style="left:217px;top:717px;width:1px;height:24px;background:#101a1a;"></div>
<div style="left:124px;top:739px;width:93px;height:1px;background:#5E8F8A;"></div>
<div style="left:216px;top:718px;width:1px;height:22px;background:#5E8F8A;"></div>
<span style="left:150.50px;top:722.57px;font-size:13.5px;transform:scaleX(1.0248);">Delete</span>
<div style="left:220px;top:717px;width:95px;height:24px;background:#8ABFB8;"></div>
<div style="left:220px;top:717px;width:95px;height:1px;background:#C4E6E0;"></div>
<div style="left:220px;top:717px;width:1px;height:24px;background:#C4E6E0;"></div>
<div style="left:220px;top:740px;width:95px;height:1px;background:#101a1a;"></div>
<div style="left:314px;top:717px;width:1px;height:24px;background:#101a1a;"></div>
<div style="left:221px;top:739px;width:93px;height:1px;background:#5E8F8A;"></div>
<div style="left:313px;top:718px;width:1px;height:22px;background:#5E8F8A;"></div>
<span style="left:239.00px;top:722.57px;font-size:13.5px;transform:scaleX(1.0128);">Delete all</span>
<div style="left:322px;top:717px;width:108px;height:24px;background:#000;"></div>
<div style="left:323px;top:718px;width:106px;height:22px;background:#8ABFB8;"></div>
<div style="left:323px;top:718px;width:106px;height:1px;background:#C4E6E0;"></div>
<div style="left:323px;top:718px;width:1px;height:22px;background:#C4E6E0;"></div>
<div style="left:323px;top:739px;width:106px;height:1px;background:#101a1a;"></div>
<div style="left:428px;top:718px;width:1px;height:22px;background:#101a1a;"></div>
<div style="left:324px;top:738px;width:104px;height:1px;background:#5E8F8A;"></div>
<div style="left:427px;top:719px;width:1px;height:20px;background:#5E8F8A;"></div>
<span style="left:340.00px;top:722.57px;font-size:13.5px;">Change qty.</span>
<div style="left:430px;top:717px;width:107px;height:24px;background:#8ABFB8;"></div>
<div style="left:430px;top:717px;width:107px;height:1px;background:#C4E6E0;"></div>
<div style="left:430px;top:717px;width:1px;height:24px;background:#C4E6E0;"></div>
<div style="left:430px;top:740px;width:107px;height:1px;background:#101a1a;"></div>
<div style="left:536px;top:717px;width:1px;height:24px;background:#101a1a;"></div>
<div style="left:431px;top:739px;width:105px;height:1px;background:#5E8F8A;"></div>
<div style="left:535px;top:718px;width:1px;height:22px;background:#5E8F8A;"></div>
<span style="left:444.00px;top:722.57px;font-size:13.5px;">New strategy</span>
<div style="left:541px;top:717px;width:85px;height:24px;background:#8ABFB8;"></div>
<div style="left:541px;top:717px;width:85px;height:1px;background:#C4E6E0;"></div>
<div style="left:541px;top:717px;width:1px;height:24px;background:#C4E6E0;"></div>
<div style="left:541px;top:740px;width:85px;height:1px;background:#101a1a;"></div>
<div style="left:625px;top:717px;width:1px;height:24px;background:#101a1a;"></div>
<div style="left:542px;top:739px;width:83px;height:1px;background:#5E8F8A;"></div>
<div style="left:624px;top:718px;width:1px;height:22px;background:#5E8F8A;"></div>
<span style="left:553.00px;top:722.57px;font-size:13.5px;transform:scaleX(1.0554);">Take pos.</span>
<div style="left:707px;top:721px;width:12px;height:12px;background:#C9DFD8;"></div>
<div style="left:707px;top:721px;width:12px;height:1px;background:#5E8F8A;"></div>
<div style="left:707px;top:721px;width:1px;height:12px;background:#5E8F8A;"></div>
<div style="left:708px;top:722px;width:10px;height:1px;background:#101a1a;"></div>
<div style="left:708px;top:722px;width:1px;height:10px;background:#101a1a;"></div>
<div style="left:707px;top:732px;width:12px;height:1px;background:#C4E6E0;"></div>
<div style="left:718px;top:721px;width:1px;height:12px;background:#C4E6E0;"></div>
<span style="left:724.50px;top:721.07px;font-size:13.5px;transform:scaleX(1.0072);">Time value</span>
<div style="left:541px;top:538px;width:254px;height:173px;background:#8ABFB8;"></div>
<div style="left:541px;top:538px;width:254px;height:1px;background:#5E8F8A;"></div>
<div style="left:541px;top:538px;width:1px;height:173px;background:#5E8F8A;"></div>
<div style="left:541px;top:710px;width:254px;height:1px;background:#C4E6E0;"></div>
<div style="left:794px;top:538px;width:1px;height:173px;background:#C4E6E0;"></div>
<div class="hatch" style="left:543px;top:542px;width:250px;height:26px;"></div>
<div style="left:543px;top:541px;width:250px;height:1px;background:#101a1a;"></div>
<svg style="left:543px;top:541px" width="250" height="24" viewBox="0 0 250 24"><path d="M135.5 1 L140.3 16 Q141.3 19 143.8 19 L149.8 19 Q152.3 19 153.1 16 L156.5 1" fill="#C9DFD8" stroke="#0c1a1a" stroke-width="1.1"/><path d="M119.4 1 L124.2 16 Q125.2 19 127.7 19 L133.7 19 Q136.2 19 137.0 16 L140.4 1" fill="#C9DFD8" stroke="#0c1a1a" stroke-width="1.1"/><path d="M103.3 1 L108.1 16 Q109.1 19 111.6 19 L117.6 19 Q120.1 19 120.9 16 L124.3 1" fill="#C9DFD8" stroke="#0c1a1a" stroke-width="1.1"/><path d="M87.2 1 L92.0 16 Q93.0 19 95.5 19 L101.5 19 Q104.0 19 104.8 16 L108.2 1" fill="#C9DFD8" stroke="#0c1a1a" stroke-width="1.1"/><path d="M71.1 1 L75.9 16 Q76.9 19 79.4 19 L85.4 19 Q87.9 19 88.7 16 L92.1 1" fill="#C9DFD8" stroke="#0c1a1a" stroke-width="1.1"/><path d="M55.0 1 L59.8 16 Q60.8 19 63.3 19 L69.3 19 Q71.8 19 72.6 16 L76.0 1" fill="#C9DFD8" stroke="#0c1a1a" stroke-width="1.1"/><path d="M38.9 1 L43.7 16 Q44.7 19 47.2 19 L53.2 19 Q55.7 19 56.5 16 L59.9 1" fill="#C9DFD8" stroke="#0c1a1a" stroke-width="1.1"/><path d="M22.8 1 L27.6 16 Q28.6 19 31.1 19 L37.1 19 Q39.6 19 40.4 16 L43.8 1" fill="#C9DFD8" stroke="#0c1a1a" stroke-width="1.1"/><path d="M6.7 1 L11.5 16 Q12.5 19 15.0 19 L21.0 19 Q23.5 19 24.3 16 L27.7 1" fill="#8ABFB8" stroke="#0c1a1a" stroke-width="1.1"/></svg>
<span style="left:556.60px;top:545.57px;font-size:11.5px;">1</span>
<span style="left:572.70px;top:545.57px;font-size:11.5px;">2</span>
<span style="left:588.80px;top:545.57px;font-size:11.5px;">3</span>
<span style="left:604.90px;top:545.57px;font-size:11.5px;">4</span>
<span style="left:621.00px;top:545.57px;font-size:11.5px;">5</span>
<span style="left:637.10px;top:545.57px;font-size:11.5px;">6</span>
<span style="left:653.20px;top:545.57px;font-size:11.5px;">7</span>
<span style="left:669.30px;top:545.57px;font-size:11.5px;">8</span>
<span style="left:685.40px;top:545.57px;font-size:11.5px;">9</span>
<div style="left:544px;top:572px;width:249px;height:136px;background:#F7FBF6;"></div>
<div style="left:543px;top:571px;width:251px;height:1px;background:#5E8F8A;"></div>
<div style="left:543px;top:571px;width:1px;height:137px;background:#5E8F8A;"></div>
<span style="left:760.40px;top:576.87px;font-size:13.5px;transform:scaleX(0.9048);">0</span>
<div style="left:770px;top:575px;width:19px;height:12px;background:#8ABFB8;"></div>
<div style="left:770px;top:575px;width:19px;height:1px;background:#C4E6E0;"></div>
<div style="left:770px;top:575px;width:1px;height:12px;background:#C4E6E0;"></div>
<div style="left:770px;top:586px;width:19px;height:1px;background:#101a1a;"></div>
<div style="left:788px;top:575px;width:1px;height:12px;background:#101a1a;"></div>
<div style="left:770px;top:587px;width:19px;height:13px;background:#8ABFB8;"></div>
<div style="left:770px;top:587px;width:19px;height:1px;background:#C4E6E0;"></div>
<div style="left:770px;top:587px;width:1px;height:13px;background:#C4E6E0;"></div>
<div style="left:770px;top:599px;width:19px;height:1px;background:#101a1a;"></div>
<div style="left:788px;top:587px;width:1px;height:13px;background:#101a1a;"></div>
<svg style="left:770px;top:575px" width="19" height="25"><path d="M6 8 L13 8 L9.5 4.5Z M6 16 L13 16 L9.5 19.5Z" fill="#000"/></svg>
<span style="left:591.00px;top:632.07px;font-size:13.5px;transform:scaleX(0.9914);">Time Spread out of range!</span>
<span style="left:550.50px;top:692.50px;font-size:13px;font-weight:bold;transform:scaleX(1.1148);">daviddeltaneutral</span>
<div style="left:800px;top:538px;width:193px;height:173px;background:#8ABFB8;"></div>
<div style="left:800px;top:538px;width:193px;height:1px;background:#5E8F8A;"></div>
<div style="left:800px;top:538px;width:1px;height:173px;background:#5E8F8A;"></div>
<div style="left:801px;top:539px;width:191px;height:1px;background:#C4E6E0;"></div>
<div style="left:801px;top:539px;width:1px;height:171px;background:#C4E6E0;"></div>
<div style="left:800px;top:710px;width:193px;height:1px;background:#C4E6E0;"></div>
<div style="left:992px;top:538px;width:1px;height:173px;background:#C4E6E0;"></div>
<div style="left:801px;top:709px;width:191px;height:1px;background:#5E8F8A;"></div>
<div style="left:991px;top:539px;width:1px;height:171px;background:#5E8F8A;"></div>
<span style="left:808.00px;top:547.50px;font-size:13px;font-weight:bold;transform:scaleX(1.1002);">Price</span>
<span style="left:899.00px;top:547.50px;font-size:13px;font-weight:bold;transform:scaleX(1.1698);">Vola</span>
<div style="left:805px;top:575px;width:90px;height:126px;border:1px solid #5E8F8A;border-right-color:#C4E6E0;border-bottom-color:#C4E6E0"></div>
<div style="left:899px;top:575px;width:90px;height:126px;border:1px solid #5E8F8A;border-right-color:#C4E6E0;border-bottom-color:#C4E6E0"></div>
<svg style="left:810px;top:587.5px" width="14" height="14"><circle cx="7" cy="7" r="4.6" fill="#D6E7E3"/><path d="M3.6 10.4 A4.8 4.8 0 0 1 10.4 3.6" fill="none" stroke="#1c302e" stroke-width="1.4"/><path d="M3.6 10.4 A4.8 4.8 0 0 0 10.4 3.6" fill="none" stroke="#C4E6E0" stroke-width="1.2"/><circle cx="7" cy="7" r="2" fill="#000"/></svg>
<span style="left:828.00px;top:588.07px;font-size:13.5px;transform:scaleX(0.9950);">Bullish</span>
<svg style="left:810px;top:617.5px" width="14" height="14"><circle cx="7" cy="7" r="4.6" fill="#D6E7E3"/><path d="M3.6 10.4 A4.8 4.8 0 0 1 10.4 3.6" fill="none" stroke="#1c302e" stroke-width="1.4"/><path d="M3.6 10.4 A4.8 4.8 0 0 0 10.4 3.6" fill="none" stroke="#C4E6E0" stroke-width="1.2"/></svg>
<span style="left:828.00px;top:618.07px;font-size:13.5px;transform:scaleX(0.9950);">Neutral</span>
<svg style="left:810px;top:645px" width="14" height="14"><circle cx="7" cy="7" r="4.6" fill="#D6E7E3"/><path d="M3.6 10.4 A4.8 4.8 0 0 1 10.4 3.6" fill="none" stroke="#1c302e" stroke-width="1.4"/><path d="M3.6 10.4 A4.8 4.8 0 0 0 10.4 3.6" fill="none" stroke="#C4E6E0" stroke-width="1.2"/></svg>
<span style="left:828.00px;top:645.57px;font-size:13.5px;transform:scaleX(0.9950);">Bearish</span>
<svg style="left:904px;top:587.5px" width="14" height="14"><circle cx="7" cy="7" r="4.6" fill="#D6E7E3"/><path d="M3.6 10.4 A4.8 4.8 0 0 1 10.4 3.6" fill="none" stroke="#1c302e" stroke-width="1.4"/><path d="M3.6 10.4 A4.8 4.8 0 0 0 10.4 3.6" fill="none" stroke="#C4E6E0" stroke-width="1.2"/></svg>
<span style="left:923.00px;top:588.07px;font-size:13.5px;transform:scaleX(0.9950);">Bullish</span>
<svg style="left:904px;top:616.5px" width="14" height="14"><circle cx="7" cy="7" r="4.6" fill="#D6E7E3"/><path d="M3.6 10.4 A4.8 4.8 0 0 1 10.4 3.6" fill="none" stroke="#1c302e" stroke-width="1.4"/><path d="M3.6 10.4 A4.8 4.8 0 0 0 10.4 3.6" fill="none" stroke="#C4E6E0" stroke-width="1.2"/><circle cx="7" cy="7" r="2" fill="#000"/></svg>
<span style="left:922.00px;top:617.07px;font-size:13.5px;transform:scaleX(0.9950);">Neutral</span>
<svg style="left:904px;top:647px" width="14" height="14"><circle cx="7" cy="7" r="4.6" fill="#D6E7E3"/><path d="M3.6 10.4 A4.8 4.8 0 0 1 10.4 3.6" fill="none" stroke="#1c302e" stroke-width="1.4"/><path d="M3.6 10.4 A4.8 4.8 0 0 0 10.4 3.6" fill="none" stroke="#C4E6E0" stroke-width="1.2"/></svg>
<span style="left:922.00px;top:647.57px;font-size:13.5px;transform:scaleX(0.9950);">Bearish</span>
<div style="left:2079px;top:53px;width:464px;height:5px;background:#FBFDFB;"></div>
<div style="left:2514px;top:53px;width:29px;height:161px;background:#FBFDFB;"></div>
<div style="left:2080px;top:53px;width:96px;height:3px;background:#1B2A7A;border-radius:0 4px 0 0"></div>
<div style="left:2221px;top:53px;width:20px;height:5px;background:#58C030;border-radius:10px 10px 0 0"></div>
<div style="left:2357px;top:54px;width:18px;height:4px;background:#1B2A6A;border-radius:9px 9px 0 0"></div>
<svg style="left:2528px;top:118px" width="16" height="30"><path d="M2 2 L8 2 L15 14 L8 27 L2 27 L9 14 Z" fill="#1B2A7A"/></svg>
<div style="left:2543px;top:53px;width:14px;height:968px;background:#8ABFB8;"></div>
<div style="left:2543px;top:67px;width:1px;height:840px;background:#C4E6E0;"></div>
<div class="hatch" style="left:2543px;top:906px;width:14px;height:100px;"></div>
<div style="left:2543px;top:53px;width:14px;height:14px;background:#8ABFB8;"></div>
<div style="left:2543px;top:53px;width:14px;height:1px;background:#C4E6E0;"></div>
<div style="left:2543px;top:53px;width:1px;height:14px;background:#C4E6E0;"></div>
<div style="left:2543px;top:66px;width:14px;height:1px;background:#101a1a;"></div>
<div style="left:2556px;top:53px;width:1px;height:14px;background:#101a1a;"></div>
<div style="left:2543px;top:1006px;width:14px;height:15px;background:#8ABFB8;"></div>
<div style="left:2543px;top:1006px;width:14px;height:1px;background:#C4E6E0;"></div>
<div style="left:2543px;top:1006px;width:1px;height:15px;background:#C4E6E0;"></div>
<div style="left:2543px;top:1020px;width:14px;height:1px;background:#101a1a;"></div>
<div style="left:2556px;top:1006px;width:1px;height:15px;background:#101a1a;"></div>
<div style="left:2543px;top:905px;width:14px;height:1px;background:#101a1a;"></div>
<svg style="left:2543px;top:53px" width="14" height="14"><path d="M3 9 L11 9 L7 5Z" fill="#000"/></svg>
<svg style="left:2543px;top:1006px" width="14" height="15"><path d="M3 6 L11 6 L7 10Z" fill="#000"/></svg>
<div style="left:1001px;top:57px;width:1513px;height:959px;background:#8ABFB8;"></div>
<div style="left:1001px;top:57px;width:1513px;height:1px;background:#C4E6E0;"></div>
<div style="left:1001px;top:57px;width:1px;height:959px;background:#C4E6E0;"></div>
<div style="left:1001px;top:1015px;width:1513px;height:1px;background:#101a1a;"></div>
<div style="left:2513px;top:57px;width:1px;height:959px;background:#101a1a;"></div>
<div style="left:2512px;top:58px;width:1px;height:957px;background:#5E8F8A;"></div>
<div style="left:1002px;top:1014px;width:1511px;height:1px;background:#5E8F8A;"></div>
<div style="left:1003px;top:1013px;width:1509px;height:1px;background:#9BB8B3;"></div>
<div style="left:1002px;top:58px;width:2px;height:956px;background:#C4E6E0;"></div>
<div style="left:1004px;top:60px;width:1507px;height:24px;background:linear-gradient(90deg,#08088C 0%,#0A1490 15%,#0A2A96 27%,#0A4CA0 40%,#0E76AC 60%,#149ABA 80%,#18B6C6 100%);"></div>
<svg style="left:1007px;top:62px" width="20" height="20" viewBox="0 0 20 20"><rect width="20" height="20" fill="#C6C8C4"/><rect x="1" y="1" width="8.5" height="9.5" fill="#D6C0C4"/><rect x="1" y="11" width="8.5" height="5" fill="#E2AE98"/><rect x="1" y="16" width="8.5" height="3" fill="#CFC4C0"/><rect x="10" y="11" width="9" height="8" fill="#D2C8C8"/><path d="M10.5 10 L17.3 3.4 L17.6 10 Z" fill="#48E068"/><path d="M13.5 7 L17.3 3.4 L17.4 7 Z" fill="#90F0A0"/><rect x="1.5" y="9.6" width="8" height="1.7" fill="#A40C10"/><rect x="9.4" y="9.9" width="8.2" height="1.2" fill="#101010"/><path d="M18.6 10.5 L15.8 8.8 L15.8 12.2 Z" fill="#101010"/><rect x="9" y="2.2" width="1.1" height="16" fill="#101010"/><path d="M9.5 1.6 L8.3 4 L10.9 4 Z" fill="#101010"/><rect x="0" y="0" width="20" height="1.1" fill="#fff"/><rect x="0" y="0" width="1.1" height="20" fill="#fff"/></svg>
<span style="left:1030.50px;top:66.00px;font-size:13px;font-weight:bold;color:#fff;transform:scaleX(1.1524);">PositionWatch -Equity-Options</span>
<div style="left:2443px;top:62px;width:20px;height:19px;background:#8ABFB8;"></div>
<div style="left:2443px;top:62px;width:20px;height:1px;background:#C4E6E0;"></div>
<div style="left:2443px;top:62px;width:1px;height:19px;background:#C4E6E0;"></div>
<div style="left:2443px;top:80px;width:20px;height:1px;background:#101a1a;"></div>
<div style="left:2462px;top:62px;width:1px;height:19px;background:#101a1a;"></div>
<div style="left:2444px;top:79px;width:18px;height:1px;background:#5E8F8A;"></div>
<div style="left:2461px;top:63px;width:1px;height:17px;background:#5E8F8A;"></div>
<div style="left:2448px;top:75px;width:7px;height:2px;background:#000;"></div>
<div style="left:2464px;top:62px;width:21px;height:19px;background:#8ABFB8;"></div>
<div style="left:2464px;top:62px;width:21px;height:1px;background:#C4E6E0;"></div>
<div style="left:2464px;top:62px;width:1px;height:19px;background:#C4E6E0;"></div>
<div style="left:2464px;top:80px;width:21px;height:1px;background:#101a1a;"></div>
<div style="left:2484px;top:62px;width:1px;height:19px;background:#101a1a;"></div>
<div style="left:2465px;top:79px;width:19px;height:1px;background:#5E8F8A;"></div>
<div style="left:2483px;top:63px;width:1px;height:17px;background:#5E8F8A;"></div>
<div style="left:2468px;top:65px;width:12px;height:12px;border:1px solid #000;border-top:2px solid #000"></div>
<div style="left:2487px;top:62px;width:21px;height:19px;background:#8ABFB8;"></div>
<div style="left:2487px;top:62px;width:21px;height:1px;background:#C4E6E0;"></div>
<div style="left:2487px;top:62px;width:1px;height:19px;background:#C4E6E0;"></div>
<div style="left:2487px;top:80px;width:21px;height:1px;background:#101a1a;"></div>
<div style="left:2507px;top:62px;width:1px;height:19px;background:#101a1a;"></div>
<div style="left:2488px;top:79px;width:19px;height:1px;background:#5E8F8A;"></div>
<div style="left:2506px;top:63px;width:1px;height:17px;background:#5E8F8A;"></div>
<svg style="left:2487px;top:62px" width="21" height="19"><path d="M5.5 4 L14.5 14 M14.5 4 L5.5 14" stroke="#000" stroke-width="2.2" fill="none"/></svg>
<svg style="left:1004px;top:84px" width="1172" height="928" viewBox="0 0 1172 928" font-family="Liberation Sans, Arial, sans-serif"><rect width="1172" height="928" fill="#F7FBF6"/><line x1="878.5" y1="0" x2="878.5" y2="928" stroke="#3CC8D8" stroke-width="1.3"/><line x1="0" y1="464.5" x2="1168" y2="464.5" stroke="#000" stroke-width="1"/><line x1="585.5" y1="4" x2="585.5" y2="928" stroke="#000" stroke-width="1"/><path d="M585.5 1 L581.5 10 L589.5 10 Z" fill="#000"/><path d="M1171 464.5 L1162 460.5 L1162 468.5 Z" fill="#000"/><line x1="85.5" y1="460" x2="85.5" y2="465" stroke="#000" stroke-width="1"/><text x="85.5" y="484" font-size="14" text-anchor="middle" textLength="23" lengthAdjust="spacingAndGlyphs">135</text><line x1="185.5" y1="460" x2="185.5" y2="465" stroke="#000" stroke-width="1"/><text x="185.5" y="484" font-size="14" text-anchor="middle" textLength="23" lengthAdjust="spacingAndGlyphs">140</text><line x1="285.5" y1="460" x2="285.5" y2="465" stroke="#000" stroke-width="1"/><text x="285.5" y="484" font-size="14" text-anchor="middle" textLength="23" lengthAdjust="spacingAndGlyphs">145</text><line x1="385.5" y1="460" x2="385.5" y2="465" stroke="#000" stroke-width="1"/><text x="385.5" y="484" font-size="14" text-anchor="middle" textLength="23" lengthAdjust="spacingAndGlyphs">150</text><line x1="485.5" y1="460" x2="485.5" y2="465" stroke="#000" stroke-width="1"/><text x="485.5" y="484" font-size="14" text-anchor="middle" textLength="23" lengthAdjust="spacingAndGlyphs">155</text><line x1="585.5" y1="460" x2="585.5" y2="465" stroke="#000" stroke-width="1"/><text x="585.5" y="484" font-size="14" text-anchor="middle" textLength="23" lengthAdjust="spacingAndGlyphs">160</text><line x1="685.5" y1="460" x2="685.5" y2="465" stroke="#000" stroke-width="1"/><text x="685.5" y="484" font-size="14" text-anchor="middle" textLength="23" lengthAdjust="spacingAndGlyphs">165</text><line x1="785.5" y1="460" x2="785.5" y2="465" stroke="#000" stroke-width="1"/><text x="785.5" y="484" font-size="14" text-anchor="middle" textLength="23" lengthAdjust="spacingAndGlyphs">170</text><line x1="885.5" y1="460" x2="885.5" y2="465" stroke="#000" stroke-width="1"/><text x="885.5" y="484" font-size="14" text-anchor="middle" textLength="23" lengthAdjust="spacingAndGlyphs">175</text><line x1="985.5" y1="460" x2="985.5" y2="465" stroke="#000" stroke-width="1"/><text x="985.5" y="484" font-size="14" text-anchor="middle" textLength="23" lengthAdjust="spacingAndGlyphs">180</text><line x1="1085.5" y1="460" x2="1085.5" y2="465" stroke="#000" stroke-width="1"/><text x="1085.5" y="484" font-size="14" text-anchor="middle" textLength="23" lengthAdjust="spacingAndGlyphs">185</text><line x1="581" y1="64.5" x2="589" y2="64.5" stroke="#000" stroke-width="1"/><text x="595" y="69.5" font-size="14.5" textLength="35" lengthAdjust="spacingAndGlyphs">20,00</text><line x1="581" y1="164.5" x2="589" y2="164.5" stroke="#000" stroke-width="1"/><text x="595" y="169.5" font-size="14.5" textLength="35" lengthAdjust="spacingAndGlyphs">15,00</text><line x1="581" y1="264.5" x2="589" y2="264.5" stroke="#000" stroke-width="1"/><text x="595" y="269.5" font-size="14.5" textLength="35" lengthAdjust="spacingAndGlyphs">10,00</text><line x1="581" y1="364.5" x2="589" y2="364.5" stroke="#000" stroke-width="1"/><text x="595" y="369.5" font-size="14.5" textLength="27" lengthAdjust="spacingAndGlyphs">5,00</text><line x1="581" y1="564.5" x2="589" y2="564.5" stroke="#000" stroke-width="1"/><text x="593.5" y="569.5" font-size="14.5" textLength="33" lengthAdjust="spacingAndGlyphs">-5,00</text><line x1="581" y1="664.5" x2="589" y2="664.5" stroke="#000" stroke-width="1"/><text x="593.5" y="669.5" font-size="14.5" textLength="41" lengthAdjust="spacingAndGlyphs">-10,00</text><line x1="581" y1="764.5" x2="589" y2="764.5" stroke="#000" stroke-width="1"/><text x="593.5" y="769.5" font-size="14.5" textLength="41" lengthAdjust="spacingAndGlyphs">-15,00</text><line x1="581" y1="864.5" x2="589" y2="864.5" stroke="#000" stroke-width="1"/><text x="593.5" y="869.5" font-size="14.5" textLength="41" lengthAdjust="spacingAndGlyphs">-20,00</text><text x="563" y="18" font-size="14">PL</text><text x="1135" y="459" font-size="14" textLength="33" lengthAdjust="spacingAndGlyphs">Price</text><polyline points="250.5,-36.8 253.0,-22.2 255.5,-7.8 258.0,6.4 260.5,20.3 263.0,34.0 265.5,47.4 268.0,60.7 270.5,73.7 273.0,86.5 275.5,99.0 278.0,111.3 280.5,123.4 283.0,135.3 285.5,147.0 288.0,158.4 290.5,169.6 293.0,180.6 295.5,191.4 298.0,201.9 300.5,212.2 303.0,222.3 305.5,232.2 308.0,241.9 310.5,251.4 313.0,260.6 315.5,269.7 318.0,278.5 320.5,287.1 323.0,295.5 325.5,303.7 328.0,311.7 330.5,319.5 333.0,327.1 335.5,334.5 338.0,341.7 340.5,348.7 343.0,355.5 345.5,362.1 348.0,368.5 350.5,374.7 353.0,380.7 355.5,386.6 358.0,392.3 360.5,397.7 363.0,403.0 365.5,408.2 368.0,413.1 370.5,417.9 373.0,422.5 375.5,426.9 378.0,431.2 380.5,435.3 383.0,439.2 385.5,443.0 388.0,446.6 390.5,450.1 393.0,453.4 395.5,456.6 398.0,459.6 400.5,462.4 403.0,465.2 405.5,467.8 408.0,470.2 410.5,472.5 413.0,474.7 415.5,476.8 418.0,478.7 420.5,480.6 423.0,482.3 425.5,483.8 428.0,485.3 430.5,486.7 433.0,487.9 435.5,489.1 438.0,490.1 440.5,491.0 443.0,491.9 445.5,492.6 448.0,493.3 450.5,493.9 453.0,494.4 455.5,494.8 458.0,495.1 460.5,495.4 463.0,495.5 465.5,495.6 468.0,495.7 470.5,495.7 473.0,495.6 475.5,495.4 478.0,495.2 480.5,495.0 483.0,494.7 485.5,494.3 488.0,493.9 490.5,493.5 493.0,493.0 495.5,492.5 498.0,491.9 500.5,491.3 503.0,490.7 505.5,490.0 508.0,489.3 510.5,488.6 513.0,487.9 515.5,487.2 518.0,486.4 520.5,485.6 523.0,484.8 525.5,484.0 528.0,483.2 530.5,482.3 533.0,481.5 535.5,480.7 538.0,479.8 540.5,479.0 543.0,478.1 545.5,477.2 548.0,476.4 550.5,475.5 553.0,474.7 555.5,473.9 558.0,473.0 560.5,472.2 563.0,471.4 565.5,470.5 568.0,469.7 570.5,468.9 573.0,468.1 575.5,467.3 578.0,466.6 580.5,465.8 583.0,465.0 585.5,464.3 588.0,463.6 590.5,462.8 593.0,462.1 595.5,461.4 598.0,460.7 600.5,460.0 603.0,459.4 605.5,458.7 608.0,458.0 610.5,457.4 613.0,456.8 615.5,456.1 618.0,455.5 620.5,454.9 623.0,454.2 625.5,453.6 628.0,453.0 630.5,452.4 633.0,451.8 635.5,451.1 638.0,450.5 640.5,449.9 643.0,449.2 645.5,448.6 648.0,448.0 650.5,447.3 653.0,446.6 655.5,445.9 658.0,445.2 660.5,444.5 663.0,443.8 665.5,443.1 668.0,442.3 670.5,441.5 673.0,440.7 675.5,439.8 678.0,438.9 680.5,438.0 683.0,437.1 685.5,436.1 688.0,435.1 690.5,434.1 693.0,433.0 695.5,431.9 698.0,430.7 700.5,429.5 703.0,428.2 705.5,426.9 708.0,425.6 710.5,424.2 713.0,422.7 715.5,421.2 718.0,419.6 720.5,417.9 723.0,416.2 725.5,414.5 728.0,412.6 730.5,410.7 733.0,408.7 735.5,406.7 738.0,404.6 740.5,402.4 743.0,400.1 745.5,397.7 748.0,395.3 750.5,392.8 753.0,390.2 755.5,387.5 758.0,384.7 760.5,381.8 763.0,378.8 765.5,375.8 768.0,372.6 770.5,369.4 773.0,366.0 775.5,362.6 778.0,359.1 780.5,355.4 783.0,351.7 785.5,347.8 788.0,343.8 790.5,339.8 793.0,335.6 795.5,331.3 798.0,326.9 800.5,322.4 803.0,317.7 805.5,313.0 808.0,308.1 810.5,303.1 813.0,298.0 815.5,292.8 818.0,287.5 820.5,282.0 823.0,276.4 825.5,270.7 828.0,264.9 830.5,259.0 833.0,252.9 835.5,246.7 838.0,240.3 840.5,233.9 843.0,227.3 845.5,220.6 848.0,213.7 850.5,206.7 853.0,199.6 855.5,192.4 858.0,185.0 860.5,177.5 863.0,169.8 865.5,162.1 868.0,154.2 870.5,146.1 873.0,137.9 875.5,129.6 878.0,121.2 880.5,112.6 883.0,103.9 885.5,95.0 888.0,86.1 890.5,76.9 893.0,67.7 895.5,58.3 898.0,48.7 900.5,39.1 903.0,29.3 905.5,19.3 908.0,9.3 910.5,-0.9 913.0,-11.3 915.5,-21.8 918.0,-32.4" fill="none" stroke="#D02030" stroke-width="1.1"/><polyline points="218.0,-29.0 220.5,-10.2 223.0,8.3 225.5,26.6 228.0,44.6 230.5,62.3 233.0,79.8 235.5,97.1 238.0,114.0 240.5,130.8 243.0,147.2 245.5,163.4 248.0,179.3 250.5,195.0 253.0,210.4 255.5,225.5 258.0,240.4 260.5,255.0 263.0,269.4 265.5,283.5 268.0,297.3 270.5,310.9 273.0,324.2 275.5,337.2 278.0,350.0 280.5,362.5 283.0,374.7 285.5,386.7 288.0,398.4 290.5,409.9 293.0,421.1 295.5,432.0 298.0,442.7 300.5,453.1 303.0,463.3 305.5,473.2 308.0,482.8 310.5,492.2 313.0,501.3 315.5,510.1 318.0,518.7 320.5,527.1 323.0,535.2 325.5,543.0 328.0,550.6 330.5,557.9 333.0,565.0 335.5,571.8 338.0,578.4 340.5,584.7 343.0,590.8 345.5,596.6 348.0,602.2 350.5,607.5 353.0,612.6 355.5,617.5 358.0,622.1 360.5,626.4 363.0,630.5 365.5,634.4 368.0,638.0 370.5,641.4 373.0,644.5 375.5,647.5 378.0,650.1 380.5,652.6 383.0,654.8 385.5,656.8 388.0,658.5 390.5,660.0 393.0,661.3 395.5,662.3 398.0,663.2 400.5,663.8 403.0,664.1 405.5,664.3 408.0,664.2 410.5,663.9 413.0,663.4 415.5,662.7 418.0,661.7 420.5,660.5 423.0,659.1 425.5,657.5 428.0,655.7 430.5,653.7 433.0,651.4 435.5,649.0 438.0,646.3 440.5,643.5 443.0,640.4 445.5,637.1 448.0,633.6 450.5,629.9 453.0,626.1 455.5,622.0 458.0,617.7 460.5,613.2 463.0,608.6 465.5,603.7 468.0,598.7 470.5,593.4 473.0,588.0 475.5,582.4 478.0,576.7 480.5,570.7 483.0,564.6 485.5,558.4 488.0,552.0 490.5,545.4 493.0,538.7 495.5,531.9 498.0,524.9 500.5,517.8 503.0,510.6 505.5,503.3 508.0,496.0 510.5,488.5 513.0,481.0 515.5,473.5 518.0,465.9 520.5,458.3 523.0,450.7 525.5,443.1 528.0,435.6 530.5,428.2 533.0,420.8 535.5,413.5 538.0,406.4 540.5,399.4 543.0,392.5 545.5,385.9 548.0,379.4 550.5,373.3 553.0,367.3 555.5,361.7 558.0,356.3 560.5,351.3 563.0,346.6 565.5,342.2 568.0,338.3 570.5,334.7 573.0,331.5 575.5,328.7 578.0,326.3 580.5,324.4 583.0,322.9 585.5,321.8 588.0,321.1 590.5,320.9 593.0,321.1 595.5,321.7 598.0,322.7 600.5,324.2 603.0,326.0 605.5,328.2 608.0,330.7 610.5,333.6 613.0,336.8 615.5,340.4 618.0,344.2 620.5,348.3 623.0,352.6 625.5,357.2 628.0,362.0 630.5,366.9 633.0,372.1 635.5,377.3 638.0,382.7 640.5,388.2 643.0,393.8 645.5,399.4 648.0,405.1 650.5,410.8 653.0,416.5 655.5,422.3 658.0,428.0 660.5,433.6 663.0,439.3 665.5,444.8 668.0,450.3 670.5,455.7 673.0,461.1 675.5,466.3 678.0,471.4 680.5,476.5 683.0,481.4 685.5,486.1 688.0,490.8 690.5,495.3 693.0,499.7 695.5,503.9 698.0,508.0 700.5,511.9 703.0,515.7 705.5,519.3 708.0,522.8 710.5,526.1 713.0,529.2 715.5,532.2 718.0,535.1 720.5,537.7 723.0,540.2 725.5,542.6 728.0,544.7 730.5,546.7 733.0,548.6 735.5,550.2 738.0,551.7 740.5,553.1 743.0,554.2 745.5,555.2 748.0,556.1 750.5,556.7 753.0,557.2 755.5,557.5 758.0,557.7 760.5,557.7 763.0,557.5 765.5,557.1 768.0,556.6 770.5,555.9 773.0,555.0 775.5,553.9 778.0,552.7 780.5,551.3 783.0,549.8 785.5,548.0 788.0,546.1 790.5,544.0 793.0,541.8 795.5,539.4 798.0,536.8 800.5,534.0 803.0,531.1 805.5,527.9 808.0,524.7 810.5,521.2 813.0,517.6 815.5,513.8 818.0,509.8 820.5,505.7 823.0,501.3 825.5,496.8 828.0,492.2 830.5,487.4 833.0,482.4 835.5,477.2 838.0,471.8 840.5,466.3 843.0,460.6 845.5,454.8 848.0,448.7 850.5,442.5 853.0,436.2 855.5,429.6 858.0,422.9 860.5,416.0 863.0,409.0 865.5,401.8 868.0,394.4 870.5,386.8 873.0,379.1 875.5,371.2 878.0,363.2 880.5,354.9 883.0,346.5 885.5,338.0 888.0,329.3 890.5,320.4 893.0,311.3 895.5,302.1 898.0,292.7 900.5,283.2 903.0,273.4 905.5,263.6 908.0,253.5 910.5,243.3 913.0,233.0 915.5,222.4 918.0,211.8 920.5,200.9 923.0,189.9 925.5,178.7 928.0,167.4 930.5,156.0 933.0,144.3 935.5,132.5 938.0,120.6 940.5,108.5 943.0,96.2 945.5,83.8 948.0,71.2 950.5,58.5 953.0,45.7 955.5,32.6 958.0,19.5 960.5,6.1 963.0,-7.3 965.5,-20.9 968.0,-34.7" fill="none" stroke="#2020B8" stroke-width="1.1"/><text x="1118" y="25" font-size="14" font-weight="bold">5</text></svg>
<div style="left:2139px;top:90px;width:28px;height:15px;background:#8ABFB8;"></div>
<div style="left:2139px;top:90px;width:28px;height:1px;background:#C4E6E0;"></div>
<div style="left:2139px;top:90px;width:1px;height:15px;background:#C4E6E0;"></div>
<div style="left:2139px;top:104px;width:28px;height:1px;background:#101a1a;"></div>
<div style="left:2166px;top:90px;width:1px;height:15px;background:#101a1a;"></div>
<div style="left:2139px;top:105px;width:28px;height:15px;background:#8ABFB8;"></div>
<div style="left:2139px;top:105px;width:28px;height:1px;background:#C4E6E0;"></div>
<div style="left:2139px;top:105px;width:1px;height:15px;background:#C4E6E0;"></div>
<div style="left:2139px;top:119px;width:28px;height:1px;background:#101a1a;"></div>
<div style="left:2166px;top:105px;width:1px;height:15px;background:#101a1a;"></div>
<div style="left:2139px;top:119px;width:28px;height:1px;background:#101a1a;"></div>
<div style="left:2166px;top:90px;width:1px;height:30px;background:#101a1a;"></div>
<svg style="left:2139px;top:90px" width="28" height="30"><path d="M10 9.5 L17 9.5 L13.5 6Z M10 20 L17 20 L13.5 23.5Z" fill="#000"/></svg>
<div style="left:2176px;top:84px;width:335px;height:929px;background:#8ABFB8;"></div>
<div style="left:2509px;top:84px;width:1px;height:929px;background:#C4E6E0;"></div>
<span style="left:2181.00px;top:96.86px;font-size:16px;font-weight:bold;transform:scaleX(1.0426);">Vola</span>
<div class="hatch" style="left:2237px;top:93px;width:206px;height:22px;"></div>
<div style="left:2237px;top:93px;width:16px;height:22px;background:#8ABFB8;"></div>
<div style="left:2237px;top:93px;width:16px;height:1px;background:#C4E6E0;"></div>
<div style="left:2237px;top:93px;width:1px;height:22px;background:#C4E6E0;"></div>
<div style="left:2237px;top:114px;width:16px;height:1px;background:#101a1a;"></div>
<div style="left:2252px;top:93px;width:1px;height:22px;background:#101a1a;"></div>
<div style="left:2427px;top:93px;width:16px;height:22px;background:#8ABFB8;"></div>
<div style="left:2427px;top:93px;width:16px;height:1px;background:#C4E6E0;"></div>
<div style="left:2427px;top:93px;width:1px;height:22px;background:#C4E6E0;"></div>
<div style="left:2427px;top:114px;width:16px;height:1px;background:#101a1a;"></div>
<div style="left:2442px;top:93px;width:1px;height:22px;background:#101a1a;"></div>
<svg style="left:2237px;top:93px" width="16" height="22"><path d="M10 7.0 L6 11.0 L10 15.0Z" fill="#000"/></svg>
<svg style="left:2427px;top:93px" width="16" height="22"><path d="M6 7.0 L10 11.0 L6 15.0Z" fill="#000"/></svg>
<div style="left:2279px;top:93px;width:17px;height:22px;background:#8ABFB8;"></div>
<div style="left:2279px;top:93px;width:17px;height:1px;background:#C4E6E0;"></div>
<div style="left:2279px;top:93px;width:1px;height:22px;background:#C4E6E0;"></div>
<div style="left:2279px;top:114px;width:17px;height:1px;background:#101a1a;"></div>
<div style="left:2295px;top:93px;width:1px;height:22px;background:#101a1a;"></div>
<span style="left:2238.50px;top:122.03px;font-size:14.5px;transform:scaleX(1.0819);">+/- Vola:</span>
<span style="left:2308.00px;top:122.03px;font-size:14.5px;transform:scaleX(1.0980);">0,00</span>
<span style="left:2181.00px;top:156.46px;font-size:16px;font-weight:bold;transform:scaleX(0.9935);">Days</span>
<div class="hatch" style="left:2237px;top:154px;width:206px;height:22px;"></div>
<div style="left:2237px;top:154px;width:16px;height:22px;background:#8ABFB8;"></div>
<div style="left:2237px;top:154px;width:16px;height:1px;background:#C4E6E0;"></div>
<div style="left:2237px;top:154px;width:1px;height:22px;background:#C4E6E0;"></div>
<div style="left:2237px;top:175px;width:16px;height:1px;background:#101a1a;"></div>
<div style="left:2252px;top:154px;width:1px;height:22px;background:#101a1a;"></div>
<div style="left:2427px;top:154px;width:16px;height:22px;background:#8ABFB8;"></div>
<div style="left:2427px;top:154px;width:16px;height:1px;background:#C4E6E0;"></div>
<div style="left:2427px;top:154px;width:1px;height:22px;background:#C4E6E0;"></div>
<div style="left:2427px;top:175px;width:16px;height:1px;background:#101a1a;"></div>
<div style="left:2442px;top:154px;width:1px;height:22px;background:#101a1a;"></div>
<svg style="left:2237px;top:154px" width="16" height="22"><path d="M10 7.0 L6 11.0 L10 15.0Z" fill="#000"/></svg>
<svg style="left:2427px;top:154px" width="16" height="22"><path d="M6 7.0 L10 11.0 L6 15.0Z" fill="#000"/></svg>
<div style="left:2347px;top:154px;width:17px;height:22px;background:#8ABFB8;"></div>
<div style="left:2347px;top:154px;width:17px;height:1px;background:#C4E6E0;"></div>
<div style="left:2347px;top:154px;width:1px;height:22px;background:#C4E6E0;"></div>
<div style="left:2347px;top:175px;width:17px;height:1px;background:#101a1a;"></div>
<div style="left:2363px;top:154px;width:1px;height:22px;background:#101a1a;"></div>
<div style="left:2349px;top:156px;width:13px;height:18px;background:#787C7A;"></div>
<span style="left:2238.50px;top:183.93px;font-size:14.5px;transform:scaleX(1.1063);">Day:</span>
<span style="left:2308.00px;top:183.93px;font-size:14.5px;transform:scaleX(1.1160);">21.12.2007</span>
<div style="left:2176px;top:209px;width:334px;height:1px;background:#5E8F8A;"></div>
<div style="left:2176px;top:210px;width:334px;height:1px;background:#C4E6E0;"></div>
<span style="left:2181.50px;top:216.26px;font-size:16px;font-weight:bold;transform:scaleX(1.0219);">Price: 174,65</span>
<span style="left:2205.00px;top:245.80px;font-size:15px;color:#D02030;transform:scaleX(1.0077);">PL</span>
<span style="left:2253.80px;top:245.80px;font-size:15px;color:#D02030;transform:scaleX(1.0387);">17,28</span>
<span style="left:2334.00px;top:245.80px;font-size:15px;color:#30307A;transform:scaleX(1.0349);">PL</span>
<span style="left:2205.00px;top:274.80px;font-size:15px;color:#1030D0;transform:scaleX(1.0077);">PL</span>
<span style="left:2260.80px;top:274.80px;font-size:15px;color:#1030D0;transform:scaleX(1.0958);">5,18</span>
<span style="left:2334.00px;top:274.80px;font-size:15px;color:#7E9894;transform:scaleX(1.0349);">PL</span>
<div style="left:2176px;top:308px;width:334px;height:1px;background:#5E8F8A;"></div>
<div style="left:2176px;top:309px;width:334px;height:1px;background:#C4E6E0;"></div>
<span style="left:2185.00px;top:317.76px;font-size:16px;color:#E01020;transform:scaleX(1.0719);-webkit-text-stroke:0.35px #E01020;">Scenario 1</span>
<span style="left:2200.00px;top:340.53px;font-size:14.5px;transform:scaleX(0.9612);">Vola:</span>
<span style="left:2243.60px;top:340.53px;font-size:14.5px;">0,00%</span>
<span style="left:2313.00px;top:340.53px;font-size:14.5px;transform:scaleX(0.9662);">Date:</span>
<span style="left:2366.00px;top:340.53px;font-size:14.5px;transform:scaleX(0.9645);">12.12.2007</span>
<div style="left:2179px;top:370px;width:327px;height:58px;border:2px solid #1010D8"></div>
<span style="left:2185.00px;top:376.76px;font-size:16px;color:#1018D0;transform:scaleX(1.0719);-webkit-text-stroke:0.35px #1018D0;">Scenario 2</span>
<span style="left:2200.00px;top:399.93px;font-size:14.5px;transform:scaleX(0.9612);">Vola:</span>
<span style="left:2243.60px;top:399.93px;font-size:14.5px;">0,00</span>
<span style="left:2313.00px;top:399.93px;font-size:14.5px;transform:scaleX(0.9662);">Date:</span>
<span style="left:2364.00px;top:399.93px;font-size:14.5px;transform:scaleX(0.9645);">21.12.2007</span>
<span style="left:2185.00px;top:435.46px;font-size:16px;color:#781080;transform:scaleX(1.0719);-webkit-text-stroke:0.35px #781080;">Scenario 3</span>
<span style="left:2200.00px;top:459.33px;font-size:14.5px;transform:scaleX(0.9612);">Vola:</span>
<span style="left:2243.60px;top:459.33px;font-size:14.5px;">0,00</span>
<span style="left:2313.00px;top:456.93px;font-size:14.5px;transform:scaleX(0.9662);">Date:</span>
<span style="left:2364.00px;top:456.93px;font-size:14.5px;transform:scaleX(0.9645);">12.12.2007</span>
<span style="left:2185.00px;top:495.46px;font-size:16px;color:#7C9894;transform:scaleX(1.0719);-webkit-text-stroke:0.35px #7C9894;">Scenario 4</span>
<span style="left:2200.00px;top:518.33px;font-size:14.5px;transform:scaleX(0.9612);">Vola:</span>
<span style="left:2243.60px;top:518.33px;font-size:14.5px;">0,00</span>
<span style="left:2313.00px;top:518.33px;font-size:14.5px;transform:scaleX(0.9662);">Date:</span>
<span style="left:2364.00px;top:518.33px;font-size:14.5px;transform:scaleX(0.9645);">12.12.2007</span>
<div style="left:2176px;top:547px;width:334px;height:1px;background:#5E8F8A;"></div>
<div style="left:2176px;top:548px;width:334px;height:1px;background:#C4E6E0;"></div>
<div style="left:2177px;top:551px;width:328px;height:24px;background:#8ABFB8;"></div>
<div style="left:2177px;top:551px;width:328px;height:1px;background:#C4E6E0;"></div>
<div style="left:2177px;top:551px;width:1px;height:24px;background:#C4E6E0;"></div>
<div style="left:2177px;top:574px;width:328px;height:1px;background:#101a1a;"></div>
<div style="left:2504px;top:551px;width:1px;height:24px;background:#101a1a;"></div>
<div style="left:2178px;top:573px;width:326px;height:1px;background:#5E8F8A;"></div>
<div style="left:2503px;top:552px;width:1px;height:22px;background:#5E8F8A;"></div>
<span style="left:2287.00px;top:555.73px;font-size:14.5px;transform:scaleX(1.0151);">Reset Scenarios</span>
<div style="left:2180px;top:580px;width:12px;height:12px;background:#F4FAF6;"></div>
<div style="left:2180px;top:580px;width:12px;height:1px;background:#5E8F8A;"></div>
<div style="left:2180px;top:580px;width:1px;height:12px;background:#5E8F8A;"></div>
<div style="left:2181px;top:581px;width:10px;height:1px;background:#101a1a;"></div>
<div style="left:2181px;top:581px;width:1px;height:10px;background:#101a1a;"></div>
<div style="left:2180px;top:591px;width:12px;height:1px;background:#C4E6E0;"></div>
<div style="left:2191px;top:580px;width:1px;height:12px;background:#C4E6E0;"></div>
<svg style="left:2180px;top:580px" width="12" height="12"><path d="M3 5.5 L5 8 L9 3.5" stroke="#000" stroke-width="1.8" fill="none"/></svg>
<span style="left:2199.00px;top:579.23px;font-size:14.5px;transform:scaleX(1.0088);">5 ADS 160 -C Dec07 Vola 25,00</span>
<div style="left:2180px;top:596px;width:12px;height:12px;background:#F4FAF6;"></div>
<div style="left:2180px;top:596px;width:12px;height:1px;background:#5E8F8A;"></div>
<div style="left:2180px;top:596px;width:1px;height:12px;background:#5E8F8A;"></div>
<div style="left:2181px;top:597px;width:10px;height:1px;background:#101a1a;"></div>
<div style="left:2181px;top:597px;width:1px;height:10px;background:#101a1a;"></div>
<div style="left:2180px;top:607px;width:12px;height:1px;background:#C4E6E0;"></div>
<div style="left:2191px;top:596px;width:1px;height:12px;background:#C4E6E0;"></div>
<svg style="left:2180px;top:596px" width="12" height="12"><path d="M3 5.5 L5 8 L9 3.5" stroke="#000" stroke-width="1.8" fill="none"/></svg>
<span style="left:2199.00px;top:595.23px;font-size:14.5px;transform:scaleX(1.0140);">5 ADS 160 -P Dec07 Vola 25,00</span>
<div style="left:2180px;top:612px;width:12px;height:12px;background:#F4FAF6;"></div>
<div style="left:2180px;top:612px;width:12px;height:1px;background:#5E8F8A;"></div>
<div style="left:2180px;top:612px;width:1px;height:12px;background:#5E8F8A;"></div>
<div style="left:2181px;top:613px;width:10px;height:1px;background:#101a1a;"></div>
<div style="left:2181px;top:613px;width:1px;height:10px;background:#101a1a;"></div>
<div style="left:2180px;top:623px;width:12px;height:1px;background:#C4E6E0;"></div>
<div style="left:2191px;top:612px;width:1px;height:12px;background:#C4E6E0;"></div>
<svg style="left:2180px;top:612px" width="12" height="12"><path d="M3 5.5 L5 8 L9 3.5" stroke="#000" stroke-width="1.8" fill="none"/></svg>
<span style="left:2199.00px;top:611.23px;font-size:14.5px;">16 ADS 175 +C Jan08 Vola 25,00</span>
<div style="left:2180px;top:628px;width:12px;height:12px;background:#F4FAF6;"></div>
<div style="left:2180px;top:628px;width:12px;height:1px;background:#5E8F8A;"></div>
<div style="left:2180px;top:628px;width:1px;height:12px;background:#5E8F8A;"></div>
<div style="left:2181px;top:629px;width:10px;height:1px;background:#101a1a;"></div>
<div style="left:2181px;top:629px;width:1px;height:10px;background:#101a1a;"></div>
<div style="left:2180px;top:639px;width:12px;height:1px;background:#C4E6E0;"></div>
<div style="left:2191px;top:628px;width:1px;height:12px;background:#C4E6E0;"></div>
<svg style="left:2180px;top:628px" width="12" height="12"><path d="M3 5.5 L5 8 L9 3.5" stroke="#000" stroke-width="1.8" fill="none"/></svg>
<span style="left:2199.00px;top:627.23px;font-size:14.5px;transform:scaleX(1.0074);">21 ADS 145 +P Jan08 Vola 25,00</span>
</body></html>
